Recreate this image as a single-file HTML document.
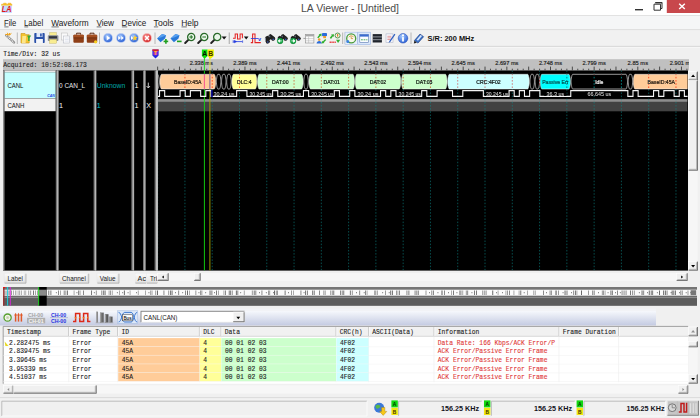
<!DOCTYPE html><html><head><meta charset="utf-8"><title>LA Viewer - [Untitled]</title>
<style>html,body{margin:0;padding:0;background:#f0f0f0;overflow:hidden}svg{display:block}text{white-space:pre}</style></head><body>
<svg width="700" height="418" viewBox="0 0 700 418">
<defs>
<linearGradient id="btn" x1="0" y1="0" x2="0" y2="1"><stop offset="0" stop-color="#fafafa"/><stop offset="1" stop-color="#e4e4e4"/></linearGradient>
<linearGradient id="tb2" x1="0" y1="0" x2="0" y2="1"><stop offset="0" stop-color="#f6f8fc"/><stop offset="1" stop-color="#c4cbe2"/></linearGradient>
<radialGradient id="blu" cx="0.4" cy="0.3" r="0.8"><stop offset="0" stop-color="#a8ccff"/><stop offset="1" stop-color="#1c54d0"/></radialGradient>
<radialGradient id="redg" cx="0.4" cy="0.35" r="0.7"><stop offset="0" stop-color="#ff9c9c"/><stop offset="1" stop-color="#d02020"/></radialGradient>
</defs>
<rect x="0.00" y="0.00" width="700.00" height="418.00" fill="#f0f0f0" />
<rect x="0.00" y="0.00" width="700.00" height="15.50" fill="#ffffff" />
<line x1="0.00" y1="15.50" x2="700.00" y2="15.50" stroke="#dcdcdc" stroke-width="0.8" />
<rect x="1.60" y="5.40" width="10.30" height="7.50" fill="#c4daff" />
<path d="M1.6 5.6v-1.4h2v-1h2.6v1h2v-1h2.6v1h1.1v1.4" fill="#f8c020" stroke="#f0a818" stroke-width="0.5"/>
<text x="1.70" y="12.30" font-family="Liberation Sans, sans-serif" font-size="8.3" font-weight="bold" fill="#e01818" text-anchor="start" textLength="9.80" lengthAdjust="spacingAndGlyphs" font-style="italic">LA</text>
<text x="350.00" y="11.90" font-family="Liberation Sans, sans-serif" font-size="10.5" font-weight="normal" fill="#4c4c4c" text-anchor="middle" textLength="98.00" lengthAdjust="spacingAndGlyphs" >LA Viewer - [Untitled]</text>
<rect x="635.00" y="9.00" width="8.00" height="1.40" fill="#333" />
<path d="M655.5 2.5h6.5v6h-1.5 M654 4.2h6.5v6h-6.5z" fill="none" stroke="#333" stroke-width="1"/>
<rect x="655.20" y="2.20" width="7.00" height="1.20" fill="#333" />
<rect x="666.80" y="0.00" width="34.00" height="13.00" fill="#c8484c" />
<path d="M679.2 3.7l5.6 5.4M684.8 3.7l-5.6 5.4" stroke="#fff" stroke-width="1.4" fill="none"/>
<rect x="0.00" y="16.00" width="700.00" height="13.60" fill="#f5f6f7" />
<line x1="0.00" y1="29.80" x2="700.00" y2="29.80" stroke="#cfcfcf" stroke-width="0.8" />
<text x="4.00" y="25.70" font-family="Liberation Sans, sans-serif" font-size="8.6" font-weight="normal" fill="#1a1a1a" text-anchor="start" textLength="12.30" lengthAdjust="spacingAndGlyphs" >File</text>
<line x1="4.30" y1="26.90" x2="8.60" y2="26.90" stroke="#1a1a1a" stroke-width="0.6" />
<text x="24.00" y="25.70" font-family="Liberation Sans, sans-serif" font-size="8.6" font-weight="normal" fill="#1a1a1a" text-anchor="start" textLength="19.20" lengthAdjust="spacingAndGlyphs" >Label</text>
<line x1="24.30" y1="26.90" x2="28.20" y2="26.90" stroke="#1a1a1a" stroke-width="0.6" />
<text x="51.20" y="25.70" font-family="Liberation Sans, sans-serif" font-size="8.6" font-weight="normal" fill="#1a1a1a" text-anchor="start" textLength="37.40" lengthAdjust="spacingAndGlyphs" >Waveform</text>
<line x1="51.50" y1="26.90" x2="58.80" y2="26.90" stroke="#1a1a1a" stroke-width="0.6" />
<text x="96.40" y="25.70" font-family="Liberation Sans, sans-serif" font-size="8.6" font-weight="normal" fill="#1a1a1a" text-anchor="start" textLength="17.60" lengthAdjust="spacingAndGlyphs" >View</text>
<line x1="96.70" y1="26.90" x2="101.40" y2="26.90" stroke="#1a1a1a" stroke-width="0.6" />
<text x="121.60" y="25.70" font-family="Liberation Sans, sans-serif" font-size="8.6" font-weight="normal" fill="#1a1a1a" text-anchor="start" textLength="24.60" lengthAdjust="spacingAndGlyphs" >Device</text>
<line x1="121.90" y1="26.90" x2="127.20" y2="26.90" stroke="#1a1a1a" stroke-width="0.6" />
<text x="153.60" y="25.70" font-family="Liberation Sans, sans-serif" font-size="8.6" font-weight="normal" fill="#1a1a1a" text-anchor="start" textLength="20.00" lengthAdjust="spacingAndGlyphs" >Tools</text>
<line x1="153.90" y1="26.90" x2="158.20" y2="26.90" stroke="#1a1a1a" stroke-width="0.6" />
<text x="181.20" y="25.70" font-family="Liberation Sans, sans-serif" font-size="8.6" font-weight="normal" fill="#1a1a1a" text-anchor="start" textLength="17.40" lengthAdjust="spacingAndGlyphs" >Help</text>
<line x1="181.50" y1="26.90" x2="186.80" y2="26.90" stroke="#1a1a1a" stroke-width="0.6" />
<rect x="0.00" y="30.20" width="700.00" height="16.00" fill="#f1f1f1" />
<line x1="0.00" y1="46.40" x2="700.00" y2="46.40" stroke="#c4c4c4" stroke-width="0.8" />
<line x1="0.00" y1="47.20" x2="700.00" y2="47.20" stroke="#fbfbfb" stroke-width="0.8" />
<g transform="translate(10,38)"><path d="M-3.8 -2.6L4 4.4" stroke="#8a8a8a" stroke-width="2.4" stroke-linecap="round"/><path d="M-3.8 -2.6L4 4.4" stroke="#f4f4f4" stroke-width="1.3" stroke-dasharray="1.1 0.9"/><path d="M-4.6-3.6l3.4.4M-2.6-5.2l1 2.4M1.4-4.6l-2.2 1.8M-0.4-5l0 2" stroke="#f0a010" stroke-width="1"/></g>
<line x1="17.30" y1="32.50" x2="17.30" y2="44.00" stroke="#a8a8a8" stroke-width="0.8" />
<g transform="translate(26,38)"><path d="M-5-4.5h4l1 1.2h3.2v8.3h-8.2z" fill="#f4c430" stroke="#c89010" stroke-width="0.6"/><path d="M-3.6-2h3.8l-.6 7h-3.8z" fill="#fde58a"/><path d="M1.2-2.6h4l-1.6 2.6v3h-1.5v-3z" fill="#38a838"/></g>
<g transform="translate(39.5,38)"><rect x="-5.2" y="-5" width="10.4" height="10" rx="0.8" fill="#2a50a8"/><rect x="-3" y="-5" width="6" height="4" fill="#dfe8fa"/><rect x="0.6" y="-4.5" width="1.6" height="3" fill="#2a50a8"/><rect x="-3.4" y="1" width="6.8" height="4" fill="#f4f6fb"/></g>
<g transform="translate(53,38)"><rect x="-3.2" y="-5.4" width="6.4" height="3.2" fill="#f8ec90" stroke="#c0b050" stroke-width="0.4"/><rect x="-5.2" y="-2.8" width="10.6" height="5.8" rx="0.8" fill="#8c9098"/><rect x="-4" y="-1.8" width="8" height="2.2" fill="#30343c"/><rect x="-3.4" y="1.4" width="7" height="3.8" fill="#f8ec90" stroke="#c0b050" stroke-width="0.4"/></g>
<g transform="translate(65.5,38)"><rect x="-4.2" y="-5" width="6" height="7" fill="#fafafa" stroke="#b8b8b8" stroke-width="0.5"/><rect x="-1.8" y="-2" width="6" height="7" fill="#fdfdfd" stroke="#b0b4c0" stroke-width="0.5"/><path d="M-0.8 0h4M-0.8 1.6h4M-0.8 3.2h4" stroke="#c4cce0" stroke-width="0.5"/></g>
<g transform="translate(78.6,38)"><path d="M-2-3.4v-1.4h4v1.4" fill="none" stroke="#5a2810" stroke-width="1"/><rect x="-5.2" y="-3.2" width="10.4" height="8" rx="1" fill="#8e3e16"/><rect x="-5.2" y="-3.2" width="10.4" height="2.6" rx="1" fill="#a44e20"/><rect x="-5.2" y="-0.4" width="10.4" height="0.7" fill="#6a2c0c"/></g>
<g transform="translate(92,38)"><path d="M-2-3.4v-1.4h4v1.4" fill="none" stroke="#5a2810" stroke-width="1"/><rect x="-5.2" y="-3.2" width="10.4" height="8" rx="1" fill="#8e3e16"/><rect x="-5.2" y="-3.2" width="10.4" height="2.6" rx="1" fill="#a44e20"/><rect x="-5.2" y="-0.4" width="10.4" height="0.7" fill="#6a2c0c"/><circle cx="3.6" cy="3.8" r="1.6" fill="#f8d020"/></g>
<line x1="99.50" y1="32.50" x2="99.50" y2="44.00" stroke="#a8a8a8" stroke-width="0.8" />
<g transform="translate(108,38)"><circle r="4.9" fill="#b4c8f2"/><circle r="4.1" fill="url(#blu)"/>
<path d="M-1.3-2.4l3.6 2.4l-3.6 2.4z" fill="#fff"/>
</g>
<g transform="translate(121,38)"><circle r="4.9" fill="#b4c8f2"/><circle r="4.1" fill="url(#blu)"/>
<path d="M-2.8-2.1l2.6 2.1l-2.6 2.1zM0.2-2.1l2.6 2.1l-2.6 2.1z" fill="#fff"/>
</g>
<g transform="translate(134,38)"><circle r="4.9" fill="#b4c8f2"/><circle r="4.1" fill="url(#blu)"/>
<path d="M-3-2l2.4 2l-2.4 2z" fill="#fff"/><path d="M0.8-3l.9 2.1h1.8l-1.4 1.4l.5 2.1l-1.8-1.2l-1.8 1.2l.5-2.1l-1-1.1h1.4z" fill="#ffd030"/>
</g>
<g transform="translate(147,38)"><circle r="4.9" fill="#f2b4b4"/><circle r="4.1" fill="url(#redg)"/><path d="M-1.9-1.9l3.8 3.8M1.9-1.9l-3.8 3.8" stroke="#fff" stroke-width="1.4"/></g>
<line x1="155.00" y1="32.50" x2="155.00" y2="44.00" stroke="#a8a8a8" stroke-width="0.8" />
<g transform="translate(162.6,38)"><path d="M-5.5 0.6l5-4.6l4 1.2l-1 3.2l-4.6 3.8z" fill="#2878d8"/><path d="M-5.5 0.6l5-4.6l4 1.2l-4.6 2z" fill="#58a0f0"/>
<path d="M1 3.4h4.6" stroke="#20a020" stroke-width="1.6"/><path d="M3.3 1.1v4.6" stroke="#20a020" stroke-width="1.6"/></g>
<g transform="translate(176,38)"><path d="M-5.5 0.6l5-4.6l4 1.2l-1 3.2l-4.6 3.8z" fill="#2878d8"/><path d="M-5.5 0.6l5-4.6l4 1.2l-4.6 2z" fill="#58a0f0"/>
<path d="M1 3.4h4.6" stroke="#20a020" stroke-width="1.6"/></g>
<g transform="translate(190,38)"><path d="M-1.4 1.6L-4.8 5" stroke="#222" stroke-width="2" stroke-linecap="round"/><circle cx="1.2" cy="-1" r="3.6" fill="#eaf6ea" stroke="#2a6a2a" stroke-width="1.3"/>
<path d="M-0.6-1h3.6" stroke="#207020" stroke-width="1"/>
<path d="M1.2-2.8v3.6" stroke="#207020" stroke-width="1"/>
</g>
<g transform="translate(203,38)"><path d="M-1.4 1.6L-4.8 5" stroke="#222" stroke-width="2" stroke-linecap="round"/><circle cx="1.2" cy="-1" r="3.6" fill="#eaf6ea" stroke="#2a6a2a" stroke-width="1.3"/>
<path d="M-0.6-1h3.6" stroke="#207020" stroke-width="1"/>
</g>
<g transform="translate(216,38)"><path d="M-1.4 1.6L-4.8 5" stroke="#222" stroke-width="2" stroke-linecap="round"/><circle cx="1.2" cy="-1" r="3.6" fill="#eaf6ea" stroke="#2a6a2a" stroke-width="1.3"/>
</g>
<path d="M221.6 36.6l2.5 3l2.5-3z" fill="#111"/>
<line x1="229.30" y1="32.50" x2="229.30" y2="44.00" stroke="#b8b8b8" stroke-width="1.3" />
<path d="M233 38.3h2.2v-4.3h2.3v4.9h2.6v-4.9h2.3v4.3" fill="none" stroke="#e42424" stroke-width="1.05"/>
<path d="M233.6 41.6h8.6" stroke="#2038e0" stroke-width="0.8"/><path d="M233.2 40.2v2.8M236.4 41.6l-2-1.2v2.4zM242.6 40.4v2.4" stroke="#2038e0" stroke-width="0.7" fill="#2038e0"/>
<path d="M243.9 36.6h4.6l-2.3 3z" fill="#111"/>
<path d="M250.8 42.6h1.8v-8.6h2.4v8.6h5.8" fill="none" stroke="#e42424" stroke-width="1.05"/>
<path d="M250.8 38.5h7.2" stroke="#2038e0" stroke-width="0.8"/>
<text x="257.90" y="40.60" font-family="Liberation Sans, sans-serif" font-size="5.6" font-weight="bold" fill="#2038e0" text-anchor="start" >v</text>
<g transform="translate(269.5,38.3)"><g transform="rotate(-28) scale(0.95)"><path d="M-5.2 1.2l2-4.6h2.4l0.8 1.4l0.8-1.4h2.4l2 4.6v2.2h-4v-1.8h-2.4v1.8h-4z" fill="#1e1e1e"/><circle cx="-3.2" cy="2.2" r="2.1" fill="#262626"/><circle cx="3.2" cy="2.2" r="2.1" fill="#262626"/><path d="M-3.8-2.4l-1 2.4M1.4-2.4l-.6 1.6" stroke="#8898b8" stroke-width="0.7"/><circle cx="-3.4" cy="2.6" r="0.8" fill="#3858c0"/><circle cx="3" cy="2.8" r="0.8" fill="#3858c0"/></g>
</g>
<g transform="translate(282,38.3)"><g transform="rotate(-28) scale(0.95)"><path d="M-5.2 1.2l2-4.6h2.4l0.8 1.4l0.8-1.4h2.4l2 4.6v2.2h-4v-1.8h-2.4v1.8h-4z" fill="#1e1e1e"/><circle cx="-3.2" cy="2.2" r="2.1" fill="#262626"/><circle cx="3.2" cy="2.2" r="2.1" fill="#262626"/><path d="M-3.8-2.4l-1 2.4M1.4-2.4l-.6 1.6" stroke="#8898b8" stroke-width="0.7"/><circle cx="-3.4" cy="2.6" r="0.8" fill="#3858c0"/><circle cx="3" cy="2.8" r="0.8" fill="#3858c0"/></g>
<circle cx="-1.9" cy="2.6" r="2.9" fill="#18a848" stroke="#0c7830" stroke-width="0.3"/>
<path d="M-3.6 2.6h3.4M-3.8 2.6l1.5-1.3v2.6z" stroke="#fff" stroke-width="0.8" fill="#fff"/>
</g>
<g transform="translate(295,38.3)"><g transform="rotate(-28) scale(0.95)"><path d="M-5.2 1.2l2-4.6h2.4l0.8 1.4l0.8-1.4h2.4l2 4.6v2.2h-4v-1.8h-2.4v1.8h-4z" fill="#1e1e1e"/><circle cx="-3.2" cy="2.2" r="2.1" fill="#262626"/><circle cx="3.2" cy="2.2" r="2.1" fill="#262626"/><path d="M-3.8-2.4l-1 2.4M1.4-2.4l-.6 1.6" stroke="#8898b8" stroke-width="0.7"/><circle cx="-3.4" cy="2.6" r="0.8" fill="#3858c0"/><circle cx="3" cy="2.8" r="0.8" fill="#3858c0"/></g>
<circle cx="-1.9" cy="2.6" r="2.9" fill="#18a848" stroke="#0c7830" stroke-width="0.3"/>
<path d="M-3.6 2.6h3.4M0 2.6l-1.5-1.3v2.6z" stroke="#fff" stroke-width="0.8" fill="#fff"/>
</g>
<g><rect x="305.6" y="34.3" width="8.3" height="8.7" fill="#fcfcfc" stroke="#8c8c8c" stroke-width="0.6"/><rect x="305.6" y="34.3" width="8.3" height="2.1" fill="#a8a8a8"/><path d="M305.6 38.6h8.3M305.6 40.8h8.3M308.6 36.4v6.6" stroke="#b0b0b0" stroke-width="0.5"/><path d="M303.4 38.4h2.2" stroke="#8a8a8a" stroke-width="0.8"/></g>
<g><rect x="322" y="33" width="5" height="3.2" rx="0.8" fill="#2c6cd8"/><rect x="323.2" y="36" width="2.8" height="2.2" fill="#f0a030"/><path d="M317.2 37.4l2.2-2.6l-.8-.6l3 -.6l-.2 2.8l-.8-.7l-2.2 2.6z" fill="#30b030"/><circle cx="319.2" cy="39.6" r="1.3" fill="#f0a030"/><path d="M316.6 43.6c0-3.6 5.2-3.6 5.2 0z" fill="#2c6cd8"/><path d="M326.2 40l-2.4 2.4l.8.7l-3 .4l.4-2.8l.8.7l2.4-2.4z" fill="#30b030"/></g>
<g><path d="M329.8 37.8l2-2.6l-.8-.6l3-.4l-.2 2.8l-.8-.7l-2 2.6z" fill="#30b030"/><circle cx="337.6" cy="35.5" r="2.5" fill="#f0f4e4" stroke="#4a9040" stroke-width="0.9"/><rect x="337" y="34" width="1.2" height="2.6" fill="#e08030"/><path d="M329.6 42.2h6.2" stroke="#e83838" stroke-width="1.5" stroke-dasharray="1.3 0.5"/><path d="M336 39.8h4.2l-2.1 3.2z" fill="#30b030"/></g>
<line x1="342.60" y1="32.50" x2="342.60" y2="44.00" stroke="#a8a8a8" stroke-width="0.8" />
<rect x="345.00" y="32.20" width="12.40" height="12.40" fill="#e6eefa" stroke="#a4bce4" stroke-width="0.6"/>
<line x1="344.30" y1="32.50" x2="344.30" y2="44.00" stroke="#c8c8c8" stroke-width="0.6" />
<g transform="translate(351.2,38.4)"><circle r="4.5" fill="#f6f8ec" stroke="#4a9a3a" stroke-width="1.3"/><path d="M-2.4-1.2a2.8 2.8 0 0 1 4.8 0" stroke="#e08828" stroke-width="0.8" fill="none"/><path d="M0-1.8v2h1.8" stroke="#c87820" stroke-width="0.7" fill="none"/><circle cx="-3.4" cy="3.2" r="1.5" fill="#3a80e0"/></g>
<rect x="357.80" y="32.20" width="12.60" height="12.40" fill="#dce8fa" stroke="#98b4e4" stroke-width="0.6"/>
<g transform="translate(364.2,38.4)"><rect x="-4.4" y="-4" width="8.8" height="8" fill="#fafcff" stroke="#5878b0" stroke-width="0.6"/><rect x="-4.4" y="-4" width="8.8" height="2.2" fill="#3a6cd0"/><path d="M-3.2 1.4h6.4" stroke="#38a048" stroke-width="0.9" stroke-dasharray="1.8 0.8"/></g>
<g transform="translate(377.3,38.3)"><rect x="-4.6" y="-4.2" width="9.2" height="8.4" fill="#20242c"/><path d="M-4.6-1.4h9.2M-4.6 1.4h9.2" stroke="#c0c4cc" stroke-width="0.7"/></g>
<g transform="translate(390,38.3)"><rect x="-4" y="-4.4" width="7" height="8.8" fill="#f8f8fc" stroke="#a0a8c0" stroke-width="0.5"/><path d="M-2.6-2h4M-2.6-.4h4M-2.6 1.2h3" stroke="#d04848" stroke-width="0.5"/><path d="M4.4-4.6L-0.6 2.6l-0.8 2l1.8-1.2l5-7.2z" fill="#3060c0"/></g>
<g transform="translate(403,38.3)"><circle r="4.8" fill="url(#blu)" stroke="#1c44b0" stroke-width="0.5"/><rect x="-0.9" y="-1.2" width="1.8" height="4.4" fill="#fff"/><circle cy="-2.9" r="1.05" fill="#fff"/></g>
<line x1="411.00" y1="32.50" x2="411.00" y2="44.00" stroke="#a8a8a8" stroke-width="0.8" />
<g transform="translate(419,38.3)"><path d="M-4.6 2.2l5.6-6.4l3.6 2.6l-5.6 6.4z" fill="#3a70c8" stroke="#183878" stroke-width="0.6"/><path d="M-2.4 1.4l4-4.6l1.4 1l-4 4.6z" fill="#d8e8ff"/><path d="M-4.6 2.2l-.6 3l3-.8z" fill="#222"/></g>
<text x="427.60" y="41.20" font-family="Liberation Sans, sans-serif" font-size="7.6" font-weight="bold" fill="#111" text-anchor="start" textLength="46.60" lengthAdjust="spacingAndGlyphs" >S/R: 200 MHz</text>
<text x="3.20" y="56.00" font-family="Liberation Mono, monospace" font-size="6.3" font-weight="normal" fill="#222" text-anchor="start" textLength="57.00" lengthAdjust="spacingAndGlyphs"  stroke="#222" stroke-width="0.1">Time/Div: 32 us</text>
<path d="M152.4 49.4h6.2v6l-3.1 3.2l-3.1-3.2z" fill="#2028e0"/>
<rect x="152.40" y="49.40" width="6.20" height="1.50" fill="#e82020" />
<rect x="153.50" y="51.00" width="4.00" height="4.20" fill="#c030c0" />
<text x="155.50" y="55.20" font-family="Liberation Sans, sans-serif" font-size="5.2" font-weight="bold" fill="#ffc020" text-anchor="middle" >T</text>
<path d="M201.9 49.6h5.7v6.4l-2.6 2.4h-.8l-2.3-2.4z" fill="#10e010"/><path d="M207.6 49.6h6.2v6.4l-2.8 2.4h-.8l-2.6-2.4z" fill="#f0f000"/>
<text x="204.70" y="56.00" font-family="Liberation Sans, sans-serif" font-size="6.8" font-weight="bold" fill="#001800" text-anchor="middle" >A</text>
<text x="210.70" y="56.00" font-family="Liberation Sans, sans-serif" font-size="6.8" font-weight="bold" fill="#3c3000" text-anchor="middle" >B</text>
<line x1="204.40" y1="56.00" x2="204.40" y2="70.40" stroke="#10e010" stroke-width="0.9" />
<line x1="209.90" y1="56.00" x2="209.90" y2="70.40" stroke="#e8e800" stroke-width="1" />
<rect x="3.00" y="59.20" width="686.00" height="11.20" fill="#c0c0c0" />
<text x="3.20" y="67.20" font-family="Liberation Mono, monospace" font-size="6.3" font-weight="normal" fill="#222" text-anchor="start" textLength="83.60" lengthAdjust="spacingAndGlyphs"  stroke="#222" stroke-width="0.1">Acquired: 10:52:08.173</text>
<line x1="157.65" y1="66.60" x2="157.65" y2="70.20" stroke="#2c2c2c" stroke-width="0.8" />
<line x1="163.11" y1="68.70" x2="163.11" y2="70.20" stroke="#2c2c2c" stroke-width="0.8" />
<line x1="168.56" y1="68.70" x2="168.56" y2="70.20" stroke="#2c2c2c" stroke-width="0.8" />
<line x1="174.02" y1="68.70" x2="174.02" y2="70.20" stroke="#2c2c2c" stroke-width="0.8" />
<line x1="179.47" y1="66.60" x2="179.47" y2="70.20" stroke="#2c2c2c" stroke-width="0.8" />
<line x1="184.93" y1="68.70" x2="184.93" y2="70.20" stroke="#2c2c2c" stroke-width="0.8" />
<line x1="190.39" y1="68.70" x2="190.39" y2="70.20" stroke="#2c2c2c" stroke-width="0.8" />
<line x1="195.84" y1="68.70" x2="195.84" y2="70.20" stroke="#2c2c2c" stroke-width="0.8" />
<line x1="201.30" y1="66.60" x2="201.30" y2="70.20" stroke="#2c2c2c" stroke-width="0.8" />
<line x1="206.76" y1="68.70" x2="206.76" y2="70.20" stroke="#2c2c2c" stroke-width="0.8" />
<line x1="212.21" y1="68.70" x2="212.21" y2="70.20" stroke="#2c2c2c" stroke-width="0.8" />
<line x1="217.67" y1="68.70" x2="217.67" y2="70.20" stroke="#2c2c2c" stroke-width="0.8" />
<line x1="223.12" y1="66.60" x2="223.12" y2="70.20" stroke="#2c2c2c" stroke-width="0.8" />
<line x1="228.58" y1="68.70" x2="228.58" y2="70.20" stroke="#2c2c2c" stroke-width="0.8" />
<line x1="234.04" y1="68.70" x2="234.04" y2="70.20" stroke="#2c2c2c" stroke-width="0.8" />
<line x1="239.49" y1="68.70" x2="239.49" y2="70.20" stroke="#2c2c2c" stroke-width="0.8" />
<line x1="244.95" y1="66.60" x2="244.95" y2="70.20" stroke="#2c2c2c" stroke-width="0.8" />
<line x1="250.41" y1="68.70" x2="250.41" y2="70.20" stroke="#2c2c2c" stroke-width="0.8" />
<line x1="255.86" y1="68.70" x2="255.86" y2="70.20" stroke="#2c2c2c" stroke-width="0.8" />
<line x1="261.32" y1="68.70" x2="261.32" y2="70.20" stroke="#2c2c2c" stroke-width="0.8" />
<line x1="266.77" y1="66.60" x2="266.77" y2="70.20" stroke="#2c2c2c" stroke-width="0.8" />
<line x1="272.23" y1="68.70" x2="272.23" y2="70.20" stroke="#2c2c2c" stroke-width="0.8" />
<line x1="277.69" y1="68.70" x2="277.69" y2="70.20" stroke="#2c2c2c" stroke-width="0.8" />
<line x1="283.14" y1="68.70" x2="283.14" y2="70.20" stroke="#2c2c2c" stroke-width="0.8" />
<line x1="288.60" y1="66.60" x2="288.60" y2="70.20" stroke="#2c2c2c" stroke-width="0.8" />
<line x1="294.06" y1="68.70" x2="294.06" y2="70.20" stroke="#2c2c2c" stroke-width="0.8" />
<line x1="299.51" y1="68.70" x2="299.51" y2="70.20" stroke="#2c2c2c" stroke-width="0.8" />
<line x1="304.97" y1="68.70" x2="304.97" y2="70.20" stroke="#2c2c2c" stroke-width="0.8" />
<line x1="310.43" y1="66.60" x2="310.43" y2="70.20" stroke="#2c2c2c" stroke-width="0.8" />
<line x1="315.88" y1="68.70" x2="315.88" y2="70.20" stroke="#2c2c2c" stroke-width="0.8" />
<line x1="321.34" y1="68.70" x2="321.34" y2="70.20" stroke="#2c2c2c" stroke-width="0.8" />
<line x1="326.79" y1="68.70" x2="326.79" y2="70.20" stroke="#2c2c2c" stroke-width="0.8" />
<line x1="332.25" y1="66.60" x2="332.25" y2="70.20" stroke="#2c2c2c" stroke-width="0.8" />
<line x1="337.71" y1="68.70" x2="337.71" y2="70.20" stroke="#2c2c2c" stroke-width="0.8" />
<line x1="343.16" y1="68.70" x2="343.16" y2="70.20" stroke="#2c2c2c" stroke-width="0.8" />
<line x1="348.62" y1="68.70" x2="348.62" y2="70.20" stroke="#2c2c2c" stroke-width="0.8" />
<line x1="354.07" y1="66.60" x2="354.07" y2="70.20" stroke="#2c2c2c" stroke-width="0.8" />
<line x1="359.53" y1="68.70" x2="359.53" y2="70.20" stroke="#2c2c2c" stroke-width="0.8" />
<line x1="364.99" y1="68.70" x2="364.99" y2="70.20" stroke="#2c2c2c" stroke-width="0.8" />
<line x1="370.44" y1="68.70" x2="370.44" y2="70.20" stroke="#2c2c2c" stroke-width="0.8" />
<line x1="375.90" y1="66.60" x2="375.90" y2="70.20" stroke="#2c2c2c" stroke-width="0.8" />
<line x1="381.36" y1="68.70" x2="381.36" y2="70.20" stroke="#2c2c2c" stroke-width="0.8" />
<line x1="386.81" y1="68.70" x2="386.81" y2="70.20" stroke="#2c2c2c" stroke-width="0.8" />
<line x1="392.27" y1="68.70" x2="392.27" y2="70.20" stroke="#2c2c2c" stroke-width="0.8" />
<line x1="397.73" y1="66.60" x2="397.73" y2="70.20" stroke="#2c2c2c" stroke-width="0.8" />
<line x1="403.18" y1="68.70" x2="403.18" y2="70.20" stroke="#2c2c2c" stroke-width="0.8" />
<line x1="408.64" y1="68.70" x2="408.64" y2="70.20" stroke="#2c2c2c" stroke-width="0.8" />
<line x1="414.09" y1="68.70" x2="414.09" y2="70.20" stroke="#2c2c2c" stroke-width="0.8" />
<line x1="419.55" y1="66.60" x2="419.55" y2="70.20" stroke="#2c2c2c" stroke-width="0.8" />
<line x1="425.01" y1="68.70" x2="425.01" y2="70.20" stroke="#2c2c2c" stroke-width="0.8" />
<line x1="430.46" y1="68.70" x2="430.46" y2="70.20" stroke="#2c2c2c" stroke-width="0.8" />
<line x1="435.92" y1="68.70" x2="435.92" y2="70.20" stroke="#2c2c2c" stroke-width="0.8" />
<line x1="441.38" y1="66.60" x2="441.38" y2="70.20" stroke="#2c2c2c" stroke-width="0.8" />
<line x1="446.83" y1="68.70" x2="446.83" y2="70.20" stroke="#2c2c2c" stroke-width="0.8" />
<line x1="452.29" y1="68.70" x2="452.29" y2="70.20" stroke="#2c2c2c" stroke-width="0.8" />
<line x1="457.74" y1="68.70" x2="457.74" y2="70.20" stroke="#2c2c2c" stroke-width="0.8" />
<line x1="463.20" y1="66.60" x2="463.20" y2="70.20" stroke="#2c2c2c" stroke-width="0.8" />
<line x1="468.66" y1="68.70" x2="468.66" y2="70.20" stroke="#2c2c2c" stroke-width="0.8" />
<line x1="474.11" y1="68.70" x2="474.11" y2="70.20" stroke="#2c2c2c" stroke-width="0.8" />
<line x1="479.57" y1="68.70" x2="479.57" y2="70.20" stroke="#2c2c2c" stroke-width="0.8" />
<line x1="485.02" y1="66.60" x2="485.02" y2="70.20" stroke="#2c2c2c" stroke-width="0.8" />
<line x1="490.48" y1="68.70" x2="490.48" y2="70.20" stroke="#2c2c2c" stroke-width="0.8" />
<line x1="495.94" y1="68.70" x2="495.94" y2="70.20" stroke="#2c2c2c" stroke-width="0.8" />
<line x1="501.39" y1="68.70" x2="501.39" y2="70.20" stroke="#2c2c2c" stroke-width="0.8" />
<line x1="506.85" y1="66.60" x2="506.85" y2="70.20" stroke="#2c2c2c" stroke-width="0.8" />
<line x1="512.31" y1="68.70" x2="512.31" y2="70.20" stroke="#2c2c2c" stroke-width="0.8" />
<line x1="517.76" y1="68.70" x2="517.76" y2="70.20" stroke="#2c2c2c" stroke-width="0.8" />
<line x1="523.22" y1="68.70" x2="523.22" y2="70.20" stroke="#2c2c2c" stroke-width="0.8" />
<line x1="528.67" y1="66.60" x2="528.67" y2="70.20" stroke="#2c2c2c" stroke-width="0.8" />
<line x1="534.13" y1="68.70" x2="534.13" y2="70.20" stroke="#2c2c2c" stroke-width="0.8" />
<line x1="539.59" y1="68.70" x2="539.59" y2="70.20" stroke="#2c2c2c" stroke-width="0.8" />
<line x1="545.04" y1="68.70" x2="545.04" y2="70.20" stroke="#2c2c2c" stroke-width="0.8" />
<line x1="550.50" y1="66.60" x2="550.50" y2="70.20" stroke="#2c2c2c" stroke-width="0.8" />
<line x1="555.96" y1="68.70" x2="555.96" y2="70.20" stroke="#2c2c2c" stroke-width="0.8" />
<line x1="561.41" y1="68.70" x2="561.41" y2="70.20" stroke="#2c2c2c" stroke-width="0.8" />
<line x1="566.87" y1="68.70" x2="566.87" y2="70.20" stroke="#2c2c2c" stroke-width="0.8" />
<line x1="572.33" y1="66.60" x2="572.33" y2="70.20" stroke="#2c2c2c" stroke-width="0.8" />
<line x1="577.78" y1="68.70" x2="577.78" y2="70.20" stroke="#2c2c2c" stroke-width="0.8" />
<line x1="583.24" y1="68.70" x2="583.24" y2="70.20" stroke="#2c2c2c" stroke-width="0.8" />
<line x1="588.69" y1="68.70" x2="588.69" y2="70.20" stroke="#2c2c2c" stroke-width="0.8" />
<line x1="594.15" y1="66.60" x2="594.15" y2="70.20" stroke="#2c2c2c" stroke-width="0.8" />
<line x1="599.61" y1="68.70" x2="599.61" y2="70.20" stroke="#2c2c2c" stroke-width="0.8" />
<line x1="605.06" y1="68.70" x2="605.06" y2="70.20" stroke="#2c2c2c" stroke-width="0.8" />
<line x1="610.52" y1="68.70" x2="610.52" y2="70.20" stroke="#2c2c2c" stroke-width="0.8" />
<line x1="615.98" y1="66.60" x2="615.98" y2="70.20" stroke="#2c2c2c" stroke-width="0.8" />
<line x1="621.43" y1="68.70" x2="621.43" y2="70.20" stroke="#2c2c2c" stroke-width="0.8" />
<line x1="626.89" y1="68.70" x2="626.89" y2="70.20" stroke="#2c2c2c" stroke-width="0.8" />
<line x1="632.34" y1="68.70" x2="632.34" y2="70.20" stroke="#2c2c2c" stroke-width="0.8" />
<line x1="637.80" y1="66.60" x2="637.80" y2="70.20" stroke="#2c2c2c" stroke-width="0.8" />
<line x1="643.26" y1="68.70" x2="643.26" y2="70.20" stroke="#2c2c2c" stroke-width="0.8" />
<line x1="648.71" y1="68.70" x2="648.71" y2="70.20" stroke="#2c2c2c" stroke-width="0.8" />
<line x1="654.17" y1="68.70" x2="654.17" y2="70.20" stroke="#2c2c2c" stroke-width="0.8" />
<line x1="659.62" y1="66.60" x2="659.62" y2="70.20" stroke="#2c2c2c" stroke-width="0.8" />
<line x1="665.08" y1="68.70" x2="665.08" y2="70.20" stroke="#2c2c2c" stroke-width="0.8" />
<line x1="670.54" y1="68.70" x2="670.54" y2="70.20" stroke="#2c2c2c" stroke-width="0.8" />
<line x1="675.99" y1="68.70" x2="675.99" y2="70.20" stroke="#2c2c2c" stroke-width="0.8" />
<line x1="681.45" y1="66.60" x2="681.45" y2="70.20" stroke="#2c2c2c" stroke-width="0.8" />
<line x1="686.91" y1="68.70" x2="686.91" y2="70.20" stroke="#2c2c2c" stroke-width="0.8" />
<clipPath id="rc"><rect x="157" y="59" width="532" height="12"/></clipPath>
<g clip-path="url(#rc)">
<text x="201.30" y="65.30" font-family="Liberation Sans, sans-serif" font-size="6" font-weight="normal" fill="#222" text-anchor="middle" textLength="23.20" lengthAdjust="spacingAndGlyphs"  stroke="#222" stroke-width="0.16">2.338 ms</text>
<text x="244.95" y="65.30" font-family="Liberation Sans, sans-serif" font-size="6" font-weight="normal" fill="#222" text-anchor="middle" textLength="23.20" lengthAdjust="spacingAndGlyphs"  stroke="#222" stroke-width="0.16">2.389 ms</text>
<text x="288.60" y="65.30" font-family="Liberation Sans, sans-serif" font-size="6" font-weight="normal" fill="#222" text-anchor="middle" textLength="23.20" lengthAdjust="spacingAndGlyphs"  stroke="#222" stroke-width="0.16">2.441 ms</text>
<text x="332.25" y="65.30" font-family="Liberation Sans, sans-serif" font-size="6" font-weight="normal" fill="#222" text-anchor="middle" textLength="23.20" lengthAdjust="spacingAndGlyphs"  stroke="#222" stroke-width="0.16">2.492 ms</text>
<text x="375.90" y="65.30" font-family="Liberation Sans, sans-serif" font-size="6" font-weight="normal" fill="#222" text-anchor="middle" textLength="23.20" lengthAdjust="spacingAndGlyphs"  stroke="#222" stroke-width="0.16">2.543 ms</text>
<text x="419.55" y="65.30" font-family="Liberation Sans, sans-serif" font-size="6" font-weight="normal" fill="#222" text-anchor="middle" textLength="23.20" lengthAdjust="spacingAndGlyphs"  stroke="#222" stroke-width="0.16">2.594 ms</text>
<text x="463.20" y="65.30" font-family="Liberation Sans, sans-serif" font-size="6" font-weight="normal" fill="#222" text-anchor="middle" textLength="23.20" lengthAdjust="spacingAndGlyphs"  stroke="#222" stroke-width="0.16">2.645 ms</text>
<text x="506.85" y="65.30" font-family="Liberation Sans, sans-serif" font-size="6" font-weight="normal" fill="#222" text-anchor="middle" textLength="23.20" lengthAdjust="spacingAndGlyphs"  stroke="#222" stroke-width="0.16">2.697 ms</text>
<text x="550.50" y="65.30" font-family="Liberation Sans, sans-serif" font-size="6" font-weight="normal" fill="#222" text-anchor="middle" textLength="23.20" lengthAdjust="spacingAndGlyphs"  stroke="#222" stroke-width="0.16">2.748 ms</text>
<text x="594.15" y="65.30" font-family="Liberation Sans, sans-serif" font-size="6" font-weight="normal" fill="#222" text-anchor="middle" textLength="23.20" lengthAdjust="spacingAndGlyphs"  stroke="#222" stroke-width="0.16">2.799 ms</text>
<text x="637.80" y="65.30" font-family="Liberation Sans, sans-serif" font-size="6" font-weight="normal" fill="#222" text-anchor="middle" textLength="20.40" lengthAdjust="spacingAndGlyphs"  stroke="#222" stroke-width="0.16">2.85 ms</text>
<text x="681.45" y="65.30" font-family="Liberation Sans, sans-serif" font-size="6" font-weight="normal" fill="#222" text-anchor="middle" textLength="23.20" lengthAdjust="spacingAndGlyphs"  stroke="#222" stroke-width="0.16">2.901 ms</text>
</g>
<line x1="204.40" y1="59.00" x2="204.40" y2="70.40" stroke="#10e010" stroke-width="0.9" />
<line x1="209.90" y1="59.00" x2="209.90" y2="70.40" stroke="#e4e460" stroke-width="1.1" />
<rect x="3.00" y="70.40" width="685.00" height="200.20" fill="#000" />
<rect x="3.00" y="70.40" width="1.50" height="200.20" fill="#8c8c8c" />
<rect x="4.50" y="72.20" width="51.20" height="26.20" fill="#c4ffff" />
<rect x="4.50" y="98.60" width="51.20" height="12.60" fill="#f2f2f2" />
<line x1="4.50" y1="98.50" x2="55.70" y2="98.50" stroke="#b0b0b0" stroke-width="0.5" />
<rect x="4.50" y="70.40" width="51.20" height="1.80" fill="#e8e8e8" />
<text x="7.40" y="88.20" font-family="Liberation Sans, sans-serif" font-size="7.4" font-weight="normal" fill="#111" text-anchor="start" textLength="16.00" lengthAdjust="spacingAndGlyphs" >CANL</text>
<text x="7.40" y="107.60" font-family="Liberation Sans, sans-serif" font-size="7.4" font-weight="normal" fill="#111" text-anchor="start" textLength="17.00" lengthAdjust="spacingAndGlyphs" >CANH</text>
<text x="47.20" y="97.20" font-family="Liberation Sans, sans-serif" font-size="3.8" font-weight="bold" fill="#2040e0" text-anchor="start" textLength="7.60" lengthAdjust="spacingAndGlyphs" font-style="italic">CAN</text>
<rect x="55.80" y="70.40" width="2.80" height="200.20" fill="#787878" />
<rect x="57.06" y="70.40" width="1.26" height="200.20" fill="#b6b6b6" />
<rect x="93.60" y="70.40" width="2.80" height="200.20" fill="#787878" />
<rect x="94.86" y="70.40" width="1.26" height="200.20" fill="#b6b6b6" />
<rect x="131.40" y="70.40" width="2.80" height="200.20" fill="#787878" />
<rect x="132.66" y="70.40" width="1.26" height="200.20" fill="#b6b6b6" />
<rect x="143.00" y="70.40" width="2.60" height="200.20" fill="#787878" />
<rect x="144.17" y="70.40" width="1.17" height="200.20" fill="#b6b6b6" />
<rect x="154.60" y="70.40" width="3.00" height="200.20" fill="#787878" />
<rect x="155.95" y="70.40" width="1.35" height="200.20" fill="#b6b6b6" />
<text x="59.00" y="88.20" font-family="Liberation Sans, sans-serif" font-size="7.2" font-weight="normal" fill="#e6e6e6" text-anchor="start" textLength="26.20" lengthAdjust="spacingAndGlyphs" >0 CAN_L</text>
<text x="96.80" y="88.20" font-family="Liberation Sans, sans-serif" font-size="7.2" font-weight="normal" fill="#00a8a8" text-anchor="start" textLength="28.40" lengthAdjust="spacingAndGlyphs" >Unknown</text>
<text x="134.40" y="88.20" font-family="Liberation Sans, sans-serif" font-size="7.2" font-weight="normal" fill="#f4f4f4" text-anchor="start" >1</text>
<path d="M148.3 82.6v5M146.6 86l1.7 2l1.7-2" stroke="#f4f4f4" stroke-width="0.8" fill="none"/>
<text x="59.00" y="107.60" font-family="Liberation Sans, sans-serif" font-size="7.2" font-weight="normal" fill="#f4f4f4" text-anchor="start" >1</text>
<text x="96.80" y="107.60" font-family="Liberation Sans, sans-serif" font-size="7.2" font-weight="normal" fill="#00c8c8" text-anchor="start" >1</text>
<text x="134.40" y="107.60" font-family="Liberation Sans, sans-serif" font-size="7.2" font-weight="normal" fill="#f4f4f4" text-anchor="start" >1</text>
<text x="146.20" y="107.60" font-family="Liberation Sans, sans-serif" font-size="7.2" font-weight="normal" fill="#f4f4f4" text-anchor="start" >X</text>
<clipPath id="wc"><rect x="157.8" y="70.4" width="529.8" height="200.20000000000002"/></clipPath>
<g clip-path="url(#wc)">
<rect x="157.80" y="98.90" width="529.80" height="12.40" fill="#424242" />
<line x1="157.80" y1="100.50" x2="687.60" y2="100.50" stroke="#8e8e8e" stroke-width="2.6" />
<line x1="157.65" y1="70.40" x2="157.65" y2="270.60" stroke="#0c8c8c" stroke-width="0.7" stroke-dasharray="1.5 1.65" stroke-opacity="0.8"/>
<line x1="184.93" y1="70.40" x2="184.93" y2="270.60" stroke="#0c8c8c" stroke-width="0.7" stroke-dasharray="1.5 1.65" stroke-opacity="0.8"/>
<line x1="212.21" y1="70.40" x2="212.21" y2="270.60" stroke="#0c8c8c" stroke-width="0.7" stroke-dasharray="1.5 1.65" stroke-opacity="0.8"/>
<line x1="239.49" y1="70.40" x2="239.49" y2="270.60" stroke="#0c8c8c" stroke-width="0.7" stroke-dasharray="1.5 1.65" stroke-opacity="0.8"/>
<line x1="266.77" y1="70.40" x2="266.77" y2="270.60" stroke="#0c8c8c" stroke-width="0.7" stroke-dasharray="1.5 1.65" stroke-opacity="0.8"/>
<line x1="294.05" y1="70.40" x2="294.05" y2="270.60" stroke="#0c8c8c" stroke-width="0.7" stroke-dasharray="1.5 1.65" stroke-opacity="0.8"/>
<line x1="321.33" y1="70.40" x2="321.33" y2="270.60" stroke="#0c8c8c" stroke-width="0.7" stroke-dasharray="1.5 1.65" stroke-opacity="0.8"/>
<line x1="348.61" y1="70.40" x2="348.61" y2="270.60" stroke="#0c8c8c" stroke-width="0.7" stroke-dasharray="1.5 1.65" stroke-opacity="0.8"/>
<line x1="375.89" y1="70.40" x2="375.89" y2="270.60" stroke="#0c8c8c" stroke-width="0.7" stroke-dasharray="1.5 1.65" stroke-opacity="0.8"/>
<line x1="403.17" y1="70.40" x2="403.17" y2="270.60" stroke="#0c8c8c" stroke-width="0.7" stroke-dasharray="1.5 1.65" stroke-opacity="0.8"/>
<line x1="430.45" y1="70.40" x2="430.45" y2="270.60" stroke="#0c8c8c" stroke-width="0.7" stroke-dasharray="1.5 1.65" stroke-opacity="0.8"/>
<line x1="457.73" y1="70.40" x2="457.73" y2="270.60" stroke="#0c8c8c" stroke-width="0.7" stroke-dasharray="1.5 1.65" stroke-opacity="0.8"/>
<line x1="485.01" y1="70.40" x2="485.01" y2="270.60" stroke="#0c8c8c" stroke-width="0.7" stroke-dasharray="1.5 1.65" stroke-opacity="0.8"/>
<line x1="512.29" y1="70.40" x2="512.29" y2="270.60" stroke="#0c8c8c" stroke-width="0.7" stroke-dasharray="1.5 1.65" stroke-opacity="0.8"/>
<line x1="539.57" y1="70.40" x2="539.57" y2="270.60" stroke="#0c8c8c" stroke-width="0.7" stroke-dasharray="1.5 1.65" stroke-opacity="0.8"/>
<line x1="566.85" y1="70.40" x2="566.85" y2="270.60" stroke="#0c8c8c" stroke-width="0.7" stroke-dasharray="1.5 1.65" stroke-opacity="0.8"/>
<line x1="594.13" y1="70.40" x2="594.13" y2="270.60" stroke="#0c8c8c" stroke-width="0.7" stroke-dasharray="1.5 1.65" stroke-opacity="0.8"/>
<line x1="621.41" y1="70.40" x2="621.41" y2="270.60" stroke="#0c8c8c" stroke-width="0.7" stroke-dasharray="1.5 1.65" stroke-opacity="0.8"/>
<line x1="648.69" y1="70.40" x2="648.69" y2="270.60" stroke="#0c8c8c" stroke-width="0.7" stroke-dasharray="1.5 1.65" stroke-opacity="0.8"/>
<line x1="675.97" y1="70.40" x2="675.97" y2="270.60" stroke="#0c8c8c" stroke-width="0.7" stroke-dasharray="1.5 1.65" stroke-opacity="0.8"/>
<line x1="204.40" y1="70.40" x2="204.40" y2="270.60" stroke="#10e010" stroke-width="0.9" />
<line x1="209.90" y1="70.40" x2="209.90" y2="270.60" stroke="#a8a800" stroke-width="0.9" />
<path d="M-319.05 96.4H-313.91V90.6H-308.77V96.4H-293.35V90.6H-288.21V96.4H-283.07V90.6H-272.79V96.4H-267.65V90.6H-262.51V96.4H-236.81V90.6H-226.53V96.4H-200.83V90.6H-195.69V96.4H-169.99V90.6H-164.85V96.4H-139.15V90.6H-134.01V96.4H-123.73V90.6H-118.59V96.4H-92.89V90.6H-87.75V96.4H-82.61V90.6H-77.47V96.4H-51.77V90.6H-46.63V96.4H-36.35V90.6H-20.93V96.4H-10.65V90.6H9.91V96.4H35.61V90.6H40.75V96.4H45.89V90.6H51.03V96.4H56.17V90.6H66.45V96.4H97.31V90.6H154.40V96.4H159.54V90.6H164.68V96.4H180.10V90.6H185.24V96.4H190.38V90.6H200.66V96.4H205.80V90.6H210.94V96.4H236.64V90.6H246.92V96.4H272.62V90.6H277.76V96.4H303.46V90.6H308.60V96.4H334.30V90.6H339.44V96.4H349.72V90.6H354.86V96.4H380.56V90.6H385.70V96.4H390.84V90.6H395.98V96.4H421.68V90.6H426.82V96.4H437.10V90.6H452.52V96.4H462.80V90.6H483.36V96.4H509.06V90.6H514.20V96.4H519.34V90.6H524.48V96.4H529.62V90.6H539.90V96.4H570.76V90.6H627.85V96.4H632.99V90.6H638.13V96.4H653.55V90.6H658.69V96.4H663.83V90.6H674.11V96.4H679.25V90.6H684.39V96.4H710.09V90.6H720.37V96.4H746.07V90.6H751.21V96.4H776.91V90.6H782.05V96.4H807.75V90.6H812.89V96.4H823.17V90.6H828.31V96.4H854.01V90.6H859.15V96.4H864.29V90.6H869.43V96.4H895.13V90.6H900.27V96.4H910.55V90.6H925.97V96.4H936.25V90.6H956.81V96.4H982.51V90.6H987.65V96.4H992.79V90.6H997.93V96.4H1003.07V90.6H1013.35V96.4H1044.21V90.6H1101.30" fill="none" stroke="#f4f4f4" stroke-width="1.1" stroke-linejoin="miter"/>
<rect x="544.18" y="91.60" width="22.30" height="4.20" fill="#000" />
<text x="555.33" y="96.30" font-family="Liberation Sans, sans-serif" font-size="5.4" font-weight="normal" fill="#c8c8c8" text-anchor="middle"  stroke="#c8c8c8" stroke-width="0.1">36.3 us</text>
<rect x="585.25" y="91.60" width="28.10" height="4.20" fill="#000" />
<text x="599.30" y="96.30" font-family="Liberation Sans, sans-serif" font-size="5.4" font-weight="normal" fill="#c8c8c8" text-anchor="middle"  stroke="#c8c8c8" stroke-width="0.1">66.645 us</text>
<rect x="212.54" y="91.40" width="22.70" height="4.40" fill="#000" />
<rect x="211.14" y="90.20" width="1.60" height="7.00" fill="#000090" />
<text x="213.54" y="96.30" font-family="Liberation Sans, sans-serif" font-size="5.4" font-weight="normal" fill="#c8c8c8" text-anchor="start" textLength="20.96" lengthAdjust="spacingAndGlyphs"  stroke="#c8c8c8" stroke-width="0.1">30.24 us</text>
<rect x="248.52" y="91.40" width="22.70" height="4.40" fill="#000" />
<text x="249.52" y="96.30" font-family="Liberation Sans, sans-serif" font-size="5.4" font-weight="normal" fill="#c8c8c8" text-anchor="start" textLength="22.30" lengthAdjust="spacingAndGlyphs"  stroke="#c8c8c8" stroke-width="0.1">30.245 us</text>
<rect x="279.36" y="91.40" width="22.70" height="4.40" fill="#000" />
<text x="280.36" y="96.30" font-family="Liberation Sans, sans-serif" font-size="5.4" font-weight="normal" fill="#c8c8c8" text-anchor="start" textLength="20.96" lengthAdjust="spacingAndGlyphs"  stroke="#c8c8c8" stroke-width="0.1">30.25 us</text>
<rect x="310.20" y="91.40" width="22.70" height="4.40" fill="#000" />
<text x="311.20" y="96.30" font-family="Liberation Sans, sans-serif" font-size="5.4" font-weight="normal" fill="#c8c8c8" text-anchor="start" textLength="22.30" lengthAdjust="spacingAndGlyphs"  stroke="#c8c8c8" stroke-width="0.1">30.245 us</text>
<rect x="356.46" y="91.40" width="22.70" height="4.40" fill="#000" />
<text x="357.46" y="96.30" font-family="Liberation Sans, sans-serif" font-size="5.4" font-weight="normal" fill="#c8c8c8" text-anchor="start" textLength="20.96" lengthAdjust="spacingAndGlyphs"  stroke="#c8c8c8" stroke-width="0.1">30.24 us</text>
<rect x="397.58" y="91.40" width="22.70" height="4.40" fill="#000" />
<text x="398.58" y="96.30" font-family="Liberation Sans, sans-serif" font-size="5.4" font-weight="normal" fill="#c8c8c8" text-anchor="start" textLength="22.30" lengthAdjust="spacingAndGlyphs"  stroke="#c8c8c8" stroke-width="0.1">30.245 us</text>
<rect x="484.96" y="91.40" width="22.70" height="4.40" fill="#000" />
<text x="485.96" y="96.30" font-family="Liberation Sans, sans-serif" font-size="5.4" font-weight="normal" fill="#c8c8c8" text-anchor="start" textLength="22.30" lengthAdjust="spacingAndGlyphs"  stroke="#c8c8c8" stroke-width="0.1">30.245 us</text>
<path d="M154.75 81.65C154.75 78.65 155.50 74.3 156.25 74.3H157.69C158.44 74.3 159.19 78.65 159.19 81.65C159.19 84.65 158.44 89.0 157.69 89.0H156.25C155.50 89.0 154.75 84.65 154.75 81.65Z" fill="#000" stroke="#d8d8d8" stroke-width="0.7"/>
<path d="M159.89 81.65C159.89 78.65 160.69 74.3 161.49 74.3H214.13C214.93 74.3 215.73 78.65 215.73 81.65C215.73 84.65 214.93 89.0 214.13 89.0H161.49C160.69 89.0 159.89 84.65 159.89 81.65Z" fill="#ffcc99" stroke="#f4f4f4" stroke-width="0.5"/>
<text x="187.81" y="83.50" font-family="Liberation Sans, sans-serif" font-size="5.15" font-weight="normal" fill="#1c140c" text-anchor="middle"  stroke="#1c140c" stroke-width="0.2">BaseID:45A</text>
<path d="M216.43 81.65C216.43 78.65 217.18 74.3 217.93 74.3H219.37C220.12 74.3 220.87 78.65 220.87 81.65C220.87 84.65 220.12 89.0 219.37 89.0H217.93C217.18 89.0 216.43 84.65 216.43 81.65Z" fill="#000" stroke="#d8d8d8" stroke-width="0.7"/>
<path d="M221.57 81.65C221.57 78.65 222.32 74.3 223.07 74.3H224.51C225.26 74.3 226.01 78.65 226.01 81.65C226.01 84.65 225.26 89.0 224.51 89.0H223.07C222.32 89.0 221.57 84.65 221.57 81.65Z" fill="#000" stroke="#d8d8d8" stroke-width="0.7"/>
<path d="M226.71 81.65C226.71 78.65 227.46 74.3 228.21 74.3H229.65C230.40 74.3 231.15 78.65 231.15 81.65C231.15 84.65 230.40 89.0 229.65 89.0H228.21C227.46 89.0 226.71 84.65 226.71 81.65Z" fill="#000" stroke="#d8d8d8" stroke-width="0.7"/>
<path d="M231.85 81.65C231.85 78.65 232.65 74.3 233.45 74.3H255.25C256.05 74.3 256.85 78.65 256.85 81.65C256.85 84.65 256.05 89.0 255.25 89.0H233.45C232.65 89.0 231.85 84.65 231.85 81.65Z" fill="#ffff99" stroke="#f4f4f4" stroke-width="0.5"/>
<text x="244.35" y="83.50" font-family="Liberation Sans, sans-serif" font-size="5.15" font-weight="normal" fill="#14140a" text-anchor="middle"  stroke="#14140a" stroke-width="0.2">DLC:4</text>
<path d="M257.55 81.65C257.55 78.65 258.35 74.3 259.15 74.3H301.51C302.31 74.3 303.11 78.65 303.11 81.65C303.11 84.65 302.31 89.0 301.51 89.0H259.15C258.35 89.0 257.55 84.65 257.55 81.65Z" fill="#ccffcc" stroke="#f4f4f4" stroke-width="0.5"/>
<text x="280.33" y="83.50" font-family="Liberation Sans, sans-serif" font-size="5.15" font-weight="normal" fill="#0c140c" text-anchor="middle"  stroke="#0c140c" stroke-width="0.2">DAT:00</text>
<path d="M303.81 81.65C303.81 78.65 304.56 74.3 305.31 74.3H306.75C307.50 74.3 308.25 78.65 308.25 81.65C308.25 84.65 307.50 89.0 306.75 89.0H305.31C304.56 89.0 303.81 84.65 303.81 81.65Z" fill="#000" stroke="#d8d8d8" stroke-width="0.7"/>
<path d="M308.95 81.65C308.95 78.65 309.75 74.3 310.55 74.3H352.91C353.71 74.3 354.51 78.65 354.51 81.65C354.51 84.65 353.71 89.0 352.91 89.0H310.55C309.75 89.0 308.95 84.65 308.95 81.65Z" fill="#ccffcc" stroke="#f4f4f4" stroke-width="0.5"/>
<text x="331.73" y="83.50" font-family="Liberation Sans, sans-serif" font-size="5.15" font-weight="normal" fill="#0c140c" text-anchor="middle"  stroke="#0c140c" stroke-width="0.2">DAT:01</text>
<path d="M355.21 81.65C355.21 78.65 356.01 74.3 356.81 74.3H399.17C399.97 74.3 400.77 78.65 400.77 81.65C400.77 84.65 399.97 89.0 399.17 89.0H356.81C356.01 89.0 355.21 84.65 355.21 81.65Z" fill="#ccffcc" stroke="#f4f4f4" stroke-width="0.5"/>
<text x="377.99" y="83.50" font-family="Liberation Sans, sans-serif" font-size="5.15" font-weight="normal" fill="#0c140c" text-anchor="middle"  stroke="#0c140c" stroke-width="0.2">DAT:02</text>
<path d="M401.47 81.65C401.47 78.65 402.27 74.3 403.07 74.3H445.43C446.23 74.3 447.03 78.65 447.03 81.65C447.03 84.65 446.23 89.0 445.43 89.0H403.07C402.27 89.0 401.47 84.65 401.47 81.65Z" fill="#ccffcc" stroke="#f4f4f4" stroke-width="0.5"/>
<text x="424.25" y="83.50" font-family="Liberation Sans, sans-serif" font-size="5.15" font-weight="normal" fill="#0c140c" text-anchor="middle"  stroke="#0c140c" stroke-width="0.2">DAT:03</text>
<path d="M447.73 81.65C447.73 78.65 448.53 74.3 449.33 74.3H527.67C528.47 74.3 529.27 78.65 529.27 81.65C529.27 84.65 528.47 89.0 527.67 89.0H449.33C448.53 89.0 447.73 84.65 447.73 81.65Z" fill="#ccffff" stroke="#f4f4f4" stroke-width="0.5"/>
<text x="488.50" y="83.50" font-family="Liberation Sans, sans-serif" font-size="5.15" font-weight="normal" fill="#0c1414" text-anchor="middle"  stroke="#0c1414" stroke-width="0.2">CRC:4F02</text>
<path d="M529.97 81.65C529.97 78.65 530.72 74.3 531.47 74.3H532.91C533.66 74.3 534.41 78.65 534.41 81.65C534.41 84.65 533.66 89.0 532.91 89.0H531.47C530.72 89.0 529.97 84.65 529.97 81.65Z" fill="#000" stroke="#d8d8d8" stroke-width="0.7"/>
<path d="M535.11 81.65C535.11 78.65 535.86 74.3 536.61 74.3H538.05C538.80 74.3 539.55 78.65 539.55 81.65C539.55 84.65 538.80 89.0 538.05 89.0H536.61C535.86 89.0 535.11 84.65 535.11 81.65Z" fill="#000" stroke="#d8d8d8" stroke-width="0.7"/>
<path d="M540.25 81.65C540.25 78.65 541.05 74.3 541.85 74.3H568.81C569.61 74.3 570.41 78.65 570.41 81.65C570.41 84.65 569.61 89.0 568.81 89.0H541.85C541.05 89.0 540.25 84.65 540.25 81.65Z" fill="#00ffff" stroke="#f4f4f4" stroke-width="0.5"/>
<text x="555.33" y="83.50" font-family="Liberation Sans, sans-serif" font-size="5.15" font-weight="normal" fill="#005050" text-anchor="middle"  stroke="#005050" stroke-width="0.2">Passive Err</text>
<path d="M571.11 81.65C571.11 78.65 571.91 74.3 572.71 74.3H625.90C626.70 74.3 627.50 78.65 627.50 81.65C627.50 84.65 626.70 89.0 625.90 89.0H572.71C571.91 89.0 571.11 84.65 571.11 81.65Z" fill="#000" stroke="#d8d8d8" stroke-width="0.7"/>
<text x="599.31" y="83.50" font-family="Liberation Sans, sans-serif" font-size="5.15" font-weight="normal" fill="#f0f0f0" text-anchor="middle"  stroke="#f0f0f0" stroke-width="0.2">Idle</text>
<path d="M628.20 81.65C628.20 78.65 628.95 74.3 629.70 74.3H631.14C631.89 74.3 632.64 78.65 632.64 81.65C632.64 84.65 631.89 89.0 631.14 89.0H629.70C628.95 89.0 628.20 84.65 628.20 81.65Z" fill="#000" stroke="#d8d8d8" stroke-width="0.7"/>
<path d="M633.34 81.65C633.34 78.65 634.14 74.3 634.94 74.3H687.58C688.38 74.3 689.18 78.65 689.18 81.65C689.18 84.65 688.38 89.0 687.58 89.0H634.94C634.14 89.0 633.34 84.65 633.34 81.65Z" fill="#ffcc99" stroke="#f4f4f4" stroke-width="0.5"/>
<text x="661.26" y="83.50" font-family="Liberation Sans, sans-serif" font-size="5.15" font-weight="normal" fill="#1c140c" text-anchor="middle"  stroke="#1c140c" stroke-width="0.2">BaseID:45A</text>
<path d="M689.88 81.65C689.88 78.65 690.63 74.3 691.38 74.3H692.82C693.57 74.3 694.32 78.65 694.32 81.65C694.32 84.65 693.57 89.0 692.82 89.0H691.38C690.63 89.0 689.88 84.65 689.88 81.65Z" fill="#000" stroke="#d8d8d8" stroke-width="0.7"/>
<path d="M695.02 81.65C695.02 78.65 695.77 74.3 696.52 74.3H697.96C698.71 74.3 699.46 78.65 699.46 81.65C699.46 84.65 698.71 89.0 697.96 89.0H696.52C695.77 89.0 695.02 84.65 695.02 81.65Z" fill="#000" stroke="#d8d8d8" stroke-width="0.7"/>
<path d="M700.16 81.65C700.16 78.65 700.91 74.3 701.66 74.3H703.10C703.85 74.3 704.60 78.65 704.60 81.65C704.60 84.65 703.85 89.0 703.10 89.0H701.66C700.91 89.0 700.16 84.65 700.16 81.65Z" fill="#000" stroke="#d8d8d8" stroke-width="0.7"/>
<path d="M705.30 81.65C705.30 78.65 706.10 74.3 706.90 74.3H728.70C729.50 74.3 730.30 78.65 730.30 81.65C730.30 84.65 729.50 89.0 728.70 89.0H706.90C706.10 89.0 705.30 84.65 705.30 81.65Z" fill="#ffff99" stroke="#f4f4f4" stroke-width="0.5"/>
<text x="717.80" y="83.50" font-family="Liberation Sans, sans-serif" font-size="5.15" font-weight="normal" fill="#14140a" text-anchor="middle"  stroke="#14140a" stroke-width="0.2">DLC:4</text>
<path d="M731.00 81.65C731.00 78.65 731.80 74.3 732.60 74.3H774.96C775.76 74.3 776.56 78.65 776.56 81.65C776.56 84.65 775.76 89.0 774.96 89.0H732.60C731.80 89.0 731.00 84.65 731.00 81.65Z" fill="#ccffcc" stroke="#f4f4f4" stroke-width="0.5"/>
<text x="753.78" y="83.50" font-family="Liberation Sans, sans-serif" font-size="5.15" font-weight="normal" fill="#0c140c" text-anchor="middle"  stroke="#0c140c" stroke-width="0.2">DAT:00</text>
<path d="M777.26 81.65C777.26 78.65 778.01 74.3 778.76 74.3H780.20C780.95 74.3 781.70 78.65 781.70 81.65C781.70 84.65 780.95 89.0 780.20 89.0H778.76C778.01 89.0 777.26 84.65 777.26 81.65Z" fill="#000" stroke="#d8d8d8" stroke-width="0.7"/>
<path d="M782.40 81.65C782.40 78.65 783.20 74.3 784.00 74.3H826.36C827.16 74.3 827.96 78.65 827.96 81.65C827.96 84.65 827.16 89.0 826.36 89.0H784.00C783.20 89.0 782.40 84.65 782.40 81.65Z" fill="#ccffcc" stroke="#f4f4f4" stroke-width="0.5"/>
<text x="805.18" y="83.50" font-family="Liberation Sans, sans-serif" font-size="5.15" font-weight="normal" fill="#0c140c" text-anchor="middle"  stroke="#0c140c" stroke-width="0.2">DAT:01</text>
<path d="M828.66 81.65C828.66 78.65 829.46 74.3 830.26 74.3H872.62C873.42 74.3 874.22 78.65 874.22 81.65C874.22 84.65 873.42 89.0 872.62 89.0H830.26C829.46 89.0 828.66 84.65 828.66 81.65Z" fill="#ccffcc" stroke="#f4f4f4" stroke-width="0.5"/>
<text x="851.44" y="83.50" font-family="Liberation Sans, sans-serif" font-size="5.15" font-weight="normal" fill="#0c140c" text-anchor="middle"  stroke="#0c140c" stroke-width="0.2">DAT:02</text>
<path d="M874.92 81.65C874.92 78.65 875.72 74.3 876.52 74.3H918.88C919.68 74.3 920.48 78.65 920.48 81.65C920.48 84.65 919.68 89.0 918.88 89.0H876.52C875.72 89.0 874.92 84.65 874.92 81.65Z" fill="#ccffcc" stroke="#f4f4f4" stroke-width="0.5"/>
<text x="897.70" y="83.50" font-family="Liberation Sans, sans-serif" font-size="5.15" font-weight="normal" fill="#0c140c" text-anchor="middle"  stroke="#0c140c" stroke-width="0.2">DAT:03</text>
<path d="M921.18 81.65C921.18 78.65 921.98 74.3 922.78 74.3H1001.12C1001.92 74.3 1002.72 78.65 1002.72 81.65C1002.72 84.65 1001.92 89.0 1001.12 89.0H922.78C921.98 89.0 921.18 84.65 921.18 81.65Z" fill="#ccffff" stroke="#f4f4f4" stroke-width="0.5"/>
<text x="961.95" y="83.50" font-family="Liberation Sans, sans-serif" font-size="5.15" font-weight="normal" fill="#0c1414" text-anchor="middle"  stroke="#0c1414" stroke-width="0.2">CRC:4F02</text>
<path d="M1003.42 81.65C1003.42 78.65 1004.17 74.3 1004.92 74.3H1006.36C1007.11 74.3 1007.86 78.65 1007.86 81.65C1007.86 84.65 1007.11 89.0 1006.36 89.0H1004.92C1004.17 89.0 1003.42 84.65 1003.42 81.65Z" fill="#000" stroke="#d8d8d8" stroke-width="0.7"/>
<path d="M1008.56 81.65C1008.56 78.65 1009.31 74.3 1010.06 74.3H1011.50C1012.25 74.3 1013.00 78.65 1013.00 81.65C1013.00 84.65 1012.25 89.0 1011.50 89.0H1010.06C1009.31 89.0 1008.56 84.65 1008.56 81.65Z" fill="#000" stroke="#d8d8d8" stroke-width="0.7"/>
<path d="M1013.70 81.65C1013.70 78.65 1014.50 74.3 1015.30 74.3H1042.26C1043.06 74.3 1043.86 78.65 1043.86 81.65C1043.86 84.65 1043.06 89.0 1042.26 89.0H1015.30C1014.50 89.0 1013.70 84.65 1013.70 81.65Z" fill="#00ffff" stroke="#f4f4f4" stroke-width="0.5"/>
<text x="1028.78" y="83.50" font-family="Liberation Sans, sans-serif" font-size="5.15" font-weight="normal" fill="#005050" text-anchor="middle"  stroke="#005050" stroke-width="0.2">Passive Err</text>
<path d="M1044.56 81.65C1044.56 78.65 1045.36 74.3 1046.16 74.3H1099.35C1100.15 74.3 1100.95 78.65 1100.95 81.65C1100.95 84.65 1100.15 89.0 1099.35 89.0H1046.16C1045.36 89.0 1044.56 84.65 1044.56 81.65Z" fill="#000" stroke="#d8d8d8" stroke-width="0.7"/>
<text x="1072.75" y="83.50" font-family="Liberation Sans, sans-serif" font-size="5.15" font-weight="normal" fill="#f0f0f0" text-anchor="middle"  stroke="#f0f0f0" stroke-width="0.2">Idle</text>
<clipPath id="dc"><rect x="157.8" y="73.6" width="530" height="16"/></clipPath>
<g clip-path="url(#dc)" style="mix-blend-mode:difference">
<line x1="157.65" y1="70.40" x2="157.65" y2="270.60" stroke="#00a0a0" stroke-width="0.8" stroke-dasharray="1.6 1.6"/>
<line x1="184.93" y1="70.40" x2="184.93" y2="270.60" stroke="#00a0a0" stroke-width="0.8" stroke-dasharray="1.6 1.6"/>
<line x1="212.21" y1="70.40" x2="212.21" y2="270.60" stroke="#00a0a0" stroke-width="0.8" stroke-dasharray="1.6 1.6"/>
<line x1="239.49" y1="70.40" x2="239.49" y2="270.60" stroke="#00a0a0" stroke-width="0.8" stroke-dasharray="1.6 1.6"/>
<line x1="266.77" y1="70.40" x2="266.77" y2="270.60" stroke="#00a0a0" stroke-width="0.8" stroke-dasharray="1.6 1.6"/>
<line x1="294.05" y1="70.40" x2="294.05" y2="270.60" stroke="#00a0a0" stroke-width="0.8" stroke-dasharray="1.6 1.6"/>
<line x1="321.33" y1="70.40" x2="321.33" y2="270.60" stroke="#00a0a0" stroke-width="0.8" stroke-dasharray="1.6 1.6"/>
<line x1="348.61" y1="70.40" x2="348.61" y2="270.60" stroke="#00a0a0" stroke-width="0.8" stroke-dasharray="1.6 1.6"/>
<line x1="375.89" y1="70.40" x2="375.89" y2="270.60" stroke="#00a0a0" stroke-width="0.8" stroke-dasharray="1.6 1.6"/>
<line x1="403.17" y1="70.40" x2="403.17" y2="270.60" stroke="#00a0a0" stroke-width="0.8" stroke-dasharray="1.6 1.6"/>
<line x1="430.45" y1="70.40" x2="430.45" y2="270.60" stroke="#00a0a0" stroke-width="0.8" stroke-dasharray="1.6 1.6"/>
<line x1="457.73" y1="70.40" x2="457.73" y2="270.60" stroke="#00a0a0" stroke-width="0.8" stroke-dasharray="1.6 1.6"/>
<line x1="485.01" y1="70.40" x2="485.01" y2="270.60" stroke="#00a0a0" stroke-width="0.8" stroke-dasharray="1.6 1.6"/>
<line x1="512.29" y1="70.40" x2="512.29" y2="270.60" stroke="#00a0a0" stroke-width="0.8" stroke-dasharray="1.6 1.6"/>
<line x1="539.57" y1="70.40" x2="539.57" y2="270.60" stroke="#00a0a0" stroke-width="0.8" stroke-dasharray="1.6 1.6"/>
<line x1="566.85" y1="70.40" x2="566.85" y2="270.60" stroke="#00a0a0" stroke-width="0.8" stroke-dasharray="1.6 1.6"/>
<line x1="594.13" y1="70.40" x2="594.13" y2="270.60" stroke="#00a0a0" stroke-width="0.8" stroke-dasharray="1.6 1.6"/>
<line x1="621.41" y1="70.40" x2="621.41" y2="270.60" stroke="#00a0a0" stroke-width="0.8" stroke-dasharray="1.6 1.6"/>
<line x1="648.69" y1="70.40" x2="648.69" y2="270.60" stroke="#00a0a0" stroke-width="0.8" stroke-dasharray="1.6 1.6"/>
<line x1="675.97" y1="70.40" x2="675.97" y2="270.60" stroke="#00a0a0" stroke-width="0.8" stroke-dasharray="1.6 1.6"/>
<line x1="204.40" y1="70.40" x2="204.40" y2="270.60" stroke="#10e010" stroke-width="0.65" />
<line x1="209.90" y1="70.40" x2="209.90" y2="270.60" stroke="#d8d800" stroke-width="0.6" />
</g>
</g>
<rect x="156.60" y="70.40" width="1.20" height="200.20" fill="#d0d0d0" />
<rect x="688.40" y="71.40" width="9.40" height="199.20" fill="#f6f6f6" />
<rect x="688.60" y="71.60" width="9.00" height="8.60" fill="#f0f0f0" stroke="#fff" stroke-width="0.5"/>
<line x1="697.40" y1="71.60" x2="697.40" y2="80.20" stroke="#696969" stroke-width="1" />
<line x1="688.60" y1="80.00" x2="697.60" y2="80.00" stroke="#696969" stroke-width="1" />
<line x1="696.50" y1="72.40" x2="696.50" y2="79.40" stroke="#a8a8a8" stroke-width="0.7" />
<line x1="689.40" y1="79.10" x2="696.80" y2="79.10" stroke="#a8a8a8" stroke-width="0.7" />
<path d="M691.1 76.9h4l-2-2.4z" fill="#000"/>
<rect x="688.60" y="80.40" width="9.00" height="90.00" fill="#f0f0f0" stroke="#fff" stroke-width="0.5"/>
<line x1="697.40" y1="80.40" x2="697.40" y2="170.40" stroke="#696969" stroke-width="1" />
<line x1="688.60" y1="170.20" x2="697.60" y2="170.20" stroke="#696969" stroke-width="1" />
<line x1="696.50" y1="81.20" x2="696.50" y2="169.60" stroke="#a8a8a8" stroke-width="0.7" />
<line x1="689.40" y1="169.30" x2="696.80" y2="169.30" stroke="#a8a8a8" stroke-width="0.7" />
<rect x="688.60" y="261.60" width="9.00" height="8.80" fill="#f0f0f0" stroke="#fff" stroke-width="0.5"/>
<line x1="697.40" y1="261.60" x2="697.40" y2="270.40" stroke="#696969" stroke-width="1" />
<line x1="688.60" y1="270.20" x2="697.60" y2="270.20" stroke="#696969" stroke-width="1" />
<line x1="696.50" y1="262.40" x2="696.50" y2="269.60" stroke="#a8a8a8" stroke-width="0.7" />
<line x1="689.40" y1="269.30" x2="696.80" y2="269.30" stroke="#a8a8a8" stroke-width="0.7" />
<path d="M691.1 265.0h4l-2 2.4z" fill="#000"/>
<rect x="4.20" y="273.20" width="21.60" height="9.80" fill="url(#btn)" stroke="#e4e4e4" stroke-width="0.5" rx="0.6"/>
<line x1="4.70" y1="283.10" x2="26.00" y2="283.10" stroke="#9c9c9c" stroke-width="0.7" />
<line x1="25.90" y1="273.80" x2="25.90" y2="283.20" stroke="#9c9c9c" stroke-width="0.7" />
<line x1="4.70" y1="282.30" x2="25.20" y2="282.30" stroke="#d0d0d0" stroke-width="0.6" />
<line x1="25.10" y1="274.00" x2="25.10" y2="282.40" stroke="#d0d0d0" stroke-width="0.6" />
<text x="7.60" y="280.60" font-family="Liberation Sans, sans-serif" font-size="6.9" font-weight="normal" fill="#181818" text-anchor="start" textLength="15.20" lengthAdjust="spacingAndGlyphs" >Label</text>
<rect x="59.40" y="273.20" width="29.20" height="9.80" fill="url(#btn)" stroke="#e4e4e4" stroke-width="0.5" rx="0.6"/>
<line x1="59.90" y1="283.10" x2="88.80" y2="283.10" stroke="#9c9c9c" stroke-width="0.7" />
<line x1="88.70" y1="273.80" x2="88.70" y2="283.20" stroke="#9c9c9c" stroke-width="0.7" />
<line x1="59.90" y1="282.30" x2="88.00" y2="282.30" stroke="#d0d0d0" stroke-width="0.6" />
<line x1="87.90" y1="274.00" x2="87.90" y2="282.40" stroke="#d0d0d0" stroke-width="0.6" />
<text x="62.00" y="280.60" font-family="Liberation Sans, sans-serif" font-size="6.9" font-weight="normal" fill="#181818" text-anchor="start" textLength="23.80" lengthAdjust="spacingAndGlyphs" >Channel</text>
<rect x="97.00" y="273.20" width="21.80" height="9.80" fill="url(#btn)" stroke="#e4e4e4" stroke-width="0.5" rx="0.6"/>
<line x1="97.50" y1="283.10" x2="119.00" y2="283.10" stroke="#9c9c9c" stroke-width="0.7" />
<line x1="118.90" y1="273.80" x2="118.90" y2="283.20" stroke="#9c9c9c" stroke-width="0.7" />
<line x1="97.50" y1="282.30" x2="118.20" y2="282.30" stroke="#d0d0d0" stroke-width="0.6" />
<line x1="118.10" y1="274.00" x2="118.10" y2="282.40" stroke="#d0d0d0" stroke-width="0.6" />
<text x="99.80" y="280.60" font-family="Liberation Sans, sans-serif" font-size="6.9" font-weight="normal" fill="#181818" text-anchor="start" textLength="15.80" lengthAdjust="spacingAndGlyphs" >Value</text>
<clipPath id="acc"><rect x="135" y="272" width="10.9" height="12"/></clipPath><clipPath id="trc"><rect x="146" y="272" width="11.2" height="12"/></clipPath>
<g clip-path="url(#acc)">
<rect x="135.00" y="273.20" width="15.00" height="9.80" fill="url(#btn)" stroke="#e4e4e4" stroke-width="0.5" rx="0.6"/>
<line x1="135.50" y1="283.10" x2="150.20" y2="283.10" stroke="#9c9c9c" stroke-width="0.7" />
<line x1="150.10" y1="273.80" x2="150.10" y2="283.20" stroke="#9c9c9c" stroke-width="0.7" />
<line x1="135.50" y1="282.30" x2="149.40" y2="282.30" stroke="#d0d0d0" stroke-width="0.6" />
<line x1="149.30" y1="274.00" x2="149.30" y2="282.40" stroke="#d0d0d0" stroke-width="0.6" />
<text x="137.60" y="280.60" font-family="Liberation Sans, sans-serif" font-size="6.9" font-weight="normal" fill="#181818" text-anchor="start" textLength="10.40" lengthAdjust="spacingAndGlyphs" >Act</text>
</g>
<g clip-path="url(#trc)">
<rect x="146.20" y="273.20" width="17.80" height="9.80" fill="url(#btn)" stroke="#e4e4e4" stroke-width="0.5" rx="0.6"/>
<line x1="146.70" y1="283.10" x2="164.20" y2="283.10" stroke="#9c9c9c" stroke-width="0.7" />
<line x1="164.10" y1="273.80" x2="164.10" y2="283.20" stroke="#9c9c9c" stroke-width="0.7" />
<line x1="146.70" y1="282.30" x2="163.40" y2="282.30" stroke="#d0d0d0" stroke-width="0.6" />
<line x1="163.30" y1="274.00" x2="163.30" y2="282.40" stroke="#d0d0d0" stroke-width="0.6" />
<text x="150.00" y="280.60" font-family="Liberation Sans, sans-serif" font-size="6.9" font-weight="normal" fill="#181818" text-anchor="start" textLength="10.60" lengthAdjust="spacingAndGlyphs" >Trig</text>
</g>
<rect x="157.40" y="273.00" width="530.00" height="7.80" fill="#f7f7f7" />
<rect x="157.60" y="273.20" width="10.80" height="7.40" fill="#f0f0f0" stroke="#fff" stroke-width="0.5"/>
<line x1="168.20" y1="273.20" x2="168.20" y2="280.60" stroke="#696969" stroke-width="1" />
<line x1="157.60" y1="280.40" x2="168.40" y2="280.40" stroke="#696969" stroke-width="1" />
<line x1="167.30" y1="274.00" x2="167.30" y2="279.80" stroke="#a8a8a8" stroke-width="0.7" />
<line x1="158.40" y1="279.50" x2="167.60" y2="279.50" stroke="#a8a8a8" stroke-width="0.7" />
<path d="M163.8 275.4v3l-1.9-1.5z" fill="#000"/>
<rect x="676.60" y="273.20" width="10.80" height="7.40" fill="#f0f0f0" stroke="#fff" stroke-width="0.5"/>
<line x1="687.20" y1="273.20" x2="687.20" y2="280.60" stroke="#696969" stroke-width="1" />
<line x1="676.60" y1="280.40" x2="687.40" y2="280.40" stroke="#696969" stroke-width="1" />
<line x1="686.30" y1="274.00" x2="686.30" y2="279.80" stroke="#a8a8a8" stroke-width="0.7" />
<line x1="677.40" y1="279.50" x2="686.60" y2="279.50" stroke="#a8a8a8" stroke-width="0.7" />
<path d="M681.2 275.4v3l1.9-1.5z" fill="#000"/>
<rect x="194.20" y="273.20" width="6.20" height="7.40" fill="#f0f0f0" stroke="#fff" stroke-width="0.5"/>
<line x1="200.20" y1="273.20" x2="200.20" y2="280.60" stroke="#696969" stroke-width="1" />
<line x1="194.20" y1="280.40" x2="200.40" y2="280.40" stroke="#696969" stroke-width="1" />
<line x1="199.30" y1="274.00" x2="199.30" y2="279.80" stroke="#a8a8a8" stroke-width="0.7" />
<line x1="195.00" y1="279.50" x2="199.60" y2="279.50" stroke="#a8a8a8" stroke-width="0.7" />
<rect x="3.00" y="287.00" width="694.00" height="18.60" fill="#696969" />
<rect x="3.00" y="287.00" width="694.00" height="2.70" fill="#747474" />
<rect x="3.00" y="289.70" width="694.00" height="6.00" fill="#fbfbfb" />
<rect x="3.00" y="296.90" width="694.00" height="1.20" fill="#8c8c8c" />
<rect x="3.00" y="298.20" width="694.00" height="7.40" fill="#5c5c5c" />
<path d="M4.6 290.4h0.8v4.6h-0.8zM6.6 290.4h0.9v4.6h-0.9zM8.6 290.4h0.9v4.6h-0.9zM11.2 290.4h0.7v4.6h-0.7zM13.2 290.4h0.5v4.6h-0.5zM15.5 290.4h0.7v4.6h-0.7zM17.8 290.4h0.5v4.6h-0.5zM19.5 290.4h0.6v4.6h-0.6zM21.3 290.4h0.5v4.6h-0.5zM23.9 290.4h0.5v4.6h-0.5zM25.6 290.4h0.5v4.6h-0.5zM28.5 290.4h0.6v4.6h-0.6zM30.4 290.4h0.7v4.6h-0.7zM33.0 290.4h0.9v4.6h-0.9zM35.1 290.4h0.6v4.6h-0.6zM37.4 290.4h0.6v4.6h-0.6z" fill="#484848" fill-opacity="0.8"/>
<path d="M48.4 290.4h0.8v4.6h-0.8zM50.5 290.4h0.8v4.6h-0.8zM55.9 292.1h0.7v1.1h-0.7zM58.1 290.4h0.7v4.6h-0.7zM60.0 290.4h0.5v4.6h-0.5zM63.8 290.4h0.7v4.6h-0.7zM65.6 290.4h0.6v4.6h-0.6zM67.2 290.4h0.8v4.6h-0.8zM73.8 290.4h0.5v4.6h-0.5zM76.6 292.1h0.7v1.1h-0.7zM78.2 290.4h0.7v4.6h-0.7zM79.7 290.4h0.6v4.6h-0.6zM83.2 290.4h0.7v4.6h-0.7zM91.2 290.4h0.8v4.6h-0.8zM93.9 292.1h0.7v1.1h-0.7zM95.9 290.4h0.6v4.6h-0.6zM101.5 290.4h0.5v4.6h-0.5zM102.8 290.4h0.9v4.6h-0.9zM104.6 290.4h0.9v4.6h-0.9zM108.8 290.4h0.5v4.6h-0.5zM110.4 290.4h0.6v4.6h-0.6zM111.9 290.4h0.5v4.6h-0.5zM116.9 292.1h0.7v1.1h-0.7zM119.4 290.4h0.5v4.6h-0.5zM122.4 292.1h0.7v1.1h-0.7zM123.9 290.4h0.9v4.6h-0.9zM127.7 292.1h0.7v1.1h-0.7zM129.8 290.4h0.5v4.6h-0.5zM136.0 292.1h0.7v1.1h-0.7zM137.9 290.4h0.5v4.6h-0.5zM145.2 290.4h0.5v4.6h-0.5zM148.6 292.1h0.7v1.1h-0.7zM150.5 290.4h0.6v4.6h-0.6zM151.8 290.4h0.5v4.6h-0.5zM155.5 290.4h0.6v4.6h-0.6zM157.1 290.4h0.9v4.6h-0.9zM163.6 290.4h0.7v4.6h-0.7zM168.2 290.4h0.5v4.6h-0.5zM169.9 290.4h0.9v4.6h-0.9zM171.6 290.4h0.9v4.6h-0.9zM175.3 292.1h0.7v1.1h-0.7zM178.4 290.4h0.7v4.6h-0.7zM182.4 292.1h0.7v1.1h-0.7zM185.3 290.4h0.7v4.6h-0.7zM187.0 290.4h0.9v4.6h-0.9zM189.1 290.4h0.5v4.6h-0.5zM195.6 290.4h0.6v4.6h-0.6zM198.6 292.1h0.7v1.1h-0.7zM200.3 290.4h0.6v4.6h-0.6zM201.6 290.4h0.6v4.6h-0.6zM205.4 292.1h0.7v1.1h-0.7zM209.6 290.4h0.9v4.6h-0.9zM211.5 290.4h0.8v4.6h-0.8zM214.2 292.1h0.7v1.1h-0.7zM216.0 290.4h0.8v4.6h-0.8zM218.0 290.4h0.5v4.6h-0.5zM223.7 290.4h0.5v4.6h-0.5zM225.0 290.4h0.7v4.6h-0.7zM228.8 290.4h0.8v4.6h-0.8zM230.3 290.4h0.9v4.6h-0.9zM232.1 290.4h0.5v4.6h-0.5zM235.9 290.4h0.9v4.6h-0.9zM237.5 290.4h0.7v4.6h-0.7zM240.4 292.1h0.7v1.1h-0.7zM243.9 290.4h0.5v4.6h-0.5zM251.9 290.4h0.6v4.6h-0.6zM253.8 290.4h0.8v4.6h-0.8zM255.5 290.4h0.7v4.6h-0.7zM259.1 292.1h0.7v1.1h-0.7zM261.6 290.4h0.7v4.6h-0.7zM265.9 292.1h0.7v1.1h-0.7zM268.2 290.4h0.6v4.6h-0.6zM269.5 290.4h0.6v4.6h-0.6zM273.1 292.1h0.7v1.1h-0.7zM274.1 290.4h0.9v4.6h-0.9zM275.9 290.4h0.6v4.6h-0.6zM277.4 290.4h0.6v4.6h-0.6zM284.7 290.4h0.8v4.6h-0.8zM288.1 292.1h0.7v1.1h-0.7zM291.1 290.4h0.6v4.6h-0.6zM293.0 290.4h0.5v4.6h-0.5zM300.6 290.4h0.7v4.6h-0.7zM303.7 292.1h0.7v1.1h-0.7zM305.1 290.4h0.8v4.6h-0.8zM306.9 290.4h0.8v4.6h-0.8zM312.3 290.4h0.8v4.6h-0.8zM313.8 290.4h0.8v4.6h-0.8zM319.0 290.4h0.7v4.6h-0.7zM323.6 290.4h0.6v4.6h-0.6zM324.9 290.4h0.5v4.6h-0.5zM330.5 290.4h0.7v4.6h-0.7zM332.1 290.4h0.5v4.6h-0.5zM333.4 290.4h0.8v4.6h-0.8zM340.3 290.4h0.8v4.6h-0.8zM341.9 290.4h0.6v4.6h-0.6zM343.4 290.4h0.8v4.6h-0.8zM349.9 290.4h0.8v4.6h-0.8zM351.9 290.4h0.6v4.6h-0.6zM356.3 292.1h0.7v1.1h-0.7zM359.4 290.4h0.7v4.6h-0.7zM363.8 292.1h0.7v1.1h-0.7zM365.1 290.4h0.7v4.6h-0.7zM366.8 290.4h0.5v4.6h-0.5zM374.2 290.4h0.5v4.6h-0.5zM375.5 290.4h0.6v4.6h-0.6zM376.9 290.4h0.6v4.6h-0.6zM382.4 292.1h0.7v1.1h-0.7zM385.0 290.4h0.6v4.6h-0.6zM388.8 292.1h0.7v1.1h-0.7zM390.3 290.4h0.9v4.6h-0.9zM392.0 290.4h0.8v4.6h-0.8zM396.0 290.4h0.6v4.6h-0.6zM397.7 290.4h0.5v4.6h-0.5zM399.0 290.4h0.7v4.6h-0.7zM406.6 290.4h0.7v4.6h-0.7zM408.5 290.4h0.8v4.6h-0.8zM414.7 290.4h0.7v4.6h-0.7zM416.5 290.4h0.8v4.6h-0.8zM418.4 290.4h0.6v4.6h-0.6zM425.7 290.4h0.6v4.6h-0.6zM429.3 292.1h0.7v1.1h-0.7zM431.5 290.4h0.7v4.6h-0.7zM433.2 290.4h0.7v4.6h-0.7zM437.6 292.1h0.7v1.1h-0.7zM441.0 290.4h0.5v4.6h-0.5zM442.3 290.4h0.5v4.6h-0.5zM444.0 290.4h0.7v4.6h-0.7zM448.2 292.1h0.7v1.1h-0.7zM451.5 290.4h0.5v4.6h-0.5zM453.0 290.4h0.8v4.6h-0.8zM456.6 292.1h0.7v1.1h-0.7zM459.2 290.4h0.5v4.6h-0.5zM460.5 290.4h0.8v4.6h-0.8zM462.6 290.4h0.5v4.6h-0.5zM465.9 290.4h0.6v4.6h-0.6zM467.4 290.4h0.7v4.6h-0.7zM471.6 292.1h0.7v1.1h-0.7zM474.2 290.4h0.8v4.6h-0.8zM476.1 290.4h0.8v4.6h-0.8zM482.5 290.4h0.5v4.6h-0.5zM483.8 290.4h0.7v4.6h-0.7zM485.7 290.4h0.7v4.6h-0.7zM492.3 290.4h0.9v4.6h-0.9zM496.2 292.1h0.7v1.1h-0.7zM497.8 290.4h0.5v4.6h-0.5zM502.0 292.1h0.7v1.1h-0.7zM505.7 290.4h0.5v4.6h-0.5zM507.1 290.4h0.6v4.6h-0.6zM509.0 290.4h0.7v4.6h-0.7zM513.7 290.4h0.5v4.6h-0.5zM518.8 290.4h0.5v4.6h-0.5zM520.4 290.4h0.8v4.6h-0.8zM523.8 292.1h0.7v1.1h-0.7zM527.2 290.4h0.5v4.6h-0.5zM533.6 290.4h0.5v4.6h-0.5zM534.9 290.4h0.5v4.6h-0.5zM543.1 290.4h0.7v4.6h-0.7zM546.3 292.1h0.7v1.1h-0.7zM549.7 290.4h0.7v4.6h-0.7zM551.4 290.4h0.6v4.6h-0.6zM555.1 290.4h0.5v4.6h-0.5zM556.4 290.4h0.6v4.6h-0.6zM558.0 290.4h0.6v4.6h-0.6zM562.7 292.1h0.7v1.1h-0.7zM564.6 290.4h0.9v4.6h-0.9zM566.6 290.4h0.8v4.6h-0.8zM571.2 292.1h0.7v1.1h-0.7zM573.4 290.4h0.7v4.6h-0.7zM575.0 290.4h0.8v4.6h-0.8zM576.7 290.4h0.5v4.6h-0.5zM581.1 290.4h0.9v4.6h-0.9zM588.3 290.4h0.6v4.6h-0.6zM592.3 290.4h0.6v4.6h-0.6zM593.7 290.4h0.8v4.6h-0.8zM598.3 292.1h0.7v1.1h-0.7zM601.9 290.4h0.6v4.6h-0.6zM603.3 290.4h0.6v4.6h-0.6zM604.8 290.4h0.5v4.6h-0.5zM607.7 292.1h0.7v1.1h-0.7zM610.5 290.4h0.9v4.6h-0.9zM612.1 290.4h0.7v4.6h-0.7zM615.0 292.1h0.7v1.1h-0.7zM617.1 290.4h0.7v4.6h-0.7zM619.9 292.1h0.7v1.1h-0.7zM621.7 290.4h0.7v4.6h-0.7zM623.7 290.4h0.7v4.6h-0.7zM625.7 290.4h0.7v4.6h-0.7zM630.0 290.4h0.8v4.6h-0.8zM632.0 290.4h0.6v4.6h-0.6zM633.9 290.4h0.6v4.6h-0.6zM638.9 292.1h0.7v1.1h-0.7zM641.6 290.4h0.9v4.6h-0.9zM643.4 290.4h0.7v4.6h-0.7zM647.2 292.1h0.7v1.1h-0.7zM648.8 290.4h0.9v4.6h-0.9zM650.8 290.4h0.8v4.6h-0.8zM652.3 290.4h0.8v4.6h-0.8zM656.9 292.1h0.7v1.1h-0.7zM659.0 290.4h0.9v4.6h-0.9zM663.2 290.4h0.9v4.6h-0.9zM664.9 290.4h0.9v4.6h-0.9zM666.7 290.4h0.7v4.6h-0.7zM670.7 292.1h0.7v1.1h-0.7zM671.7 290.4h0.9v4.6h-0.9zM673.4 290.4h0.9v4.6h-0.9zM675.1 290.4h0.8v4.6h-0.8zM679.1 292.1h0.7v1.1h-0.7zM680.5 290.4h0.7v4.6h-0.7zM681.9 290.4h0.6v4.6h-0.6zM685.8 292.1h0.7v1.1h-0.7zM687.7 290.4h0.6v4.6h-0.6zM690.4 292.1h0.7v1.1h-0.7z" fill="#404040" fill-opacity="0.85"/>
<rect x="690.60" y="290.20" width="5.60" height="5.00" fill="#777" />
<rect x="38.90" y="287.00" width="7.80" height="18.60" fill="#000" />
<rect x="38.90" y="289.70" width="7.80" height="6.00" fill="#8a8a8a" />
<line x1="3.80" y1="287.00" x2="3.80" y2="305.60" stroke="#9a3030" stroke-width="1.4" />
<rect x="3.00" y="287.00" width="2.20" height="1.00" fill="#f01010" />
<line x1="7.60" y1="287.00" x2="7.60" y2="305.60" stroke="#10d8e8" stroke-width="0.9" />
<line x1="10.30" y1="287.00" x2="10.30" y2="305.60" stroke="#e020e0" stroke-width="0.9" />
<line x1="38.70" y1="287.00" x2="38.70" y2="305.60" stroke="#10e010" stroke-width="0.9" />
<rect x="0.00" y="308.60" width="656.00" height="2.60" fill="#f2f3f6" />
<rect x="0.00" y="311.00" width="656.00" height="14.40" fill="url(#tb2)" />
<line x1="0.00" y1="325.60" x2="656.00" y2="325.60" stroke="#d8dcea" stroke-width="0.6" />
<g transform="translate(7.6,317.6)"><circle r="3.6" fill="#f6f8ee" stroke="#58a030" stroke-width="1.3"/><path d="M0-1.8v3.6M-1.8 0h3.6M-1.3-1.3l2.6 2.6M1.3-1.3l-2.6 2.6" stroke="#b8c8a0" stroke-width="0.6" fill="none"/></g>
<path d="M15.6 314.6v7" stroke="#e05828" stroke-width="1.5"/><path d="M14.2 315.4l1.4-2.6l1.4 2.6z" fill="#e05828"/>
<path d="M18.5 314.6v7" stroke="#e05828" stroke-width="1.5"/><path d="M17.1 315.4l1.4-2.6l1.4 2.6z" fill="#e05828"/>
<path d="M21.4 314.6v7" stroke="#e05828" stroke-width="1.5"/><path d="M20.0 315.4l1.4-2.6l1.4 2.6z" fill="#e05828"/>
<text x="28.00" y="316.60" font-family="Liberation Sans, sans-serif" font-size="5.2" font-weight="bold" fill="#a4a4a4" text-anchor="start" textLength="15.20" lengthAdjust="spacingAndGlyphs" >CH-00</text>
<rect x="27.00" y="317.80" width="18.20" height="5.60" fill="#b0b0b0" />
<text x="28.40" y="322.60" font-family="Liberation Sans, sans-serif" font-size="5.2" font-weight="bold" fill="#f6f6f6" text-anchor="start" textLength="15.20" lengthAdjust="spacingAndGlyphs" >CH-01</text>
<text x="51.00" y="316.60" font-family="Liberation Sans, sans-serif" font-size="5.2" font-weight="bold" fill="#2834e0" text-anchor="start" textLength="15.20" lengthAdjust="spacingAndGlyphs" >CH-00</text>
<line x1="50.00" y1="317.60" x2="68.00" y2="317.60" stroke="#9098c0" stroke-width="0.5" />
<text x="51.00" y="322.60" font-family="Liberation Sans, sans-serif" font-size="5.2" font-weight="bold" fill="#2834e0" text-anchor="start" textLength="15.20" lengthAdjust="spacingAndGlyphs" >CH-00</text>
<path d="M73 321.6h2.6v-8.2h4.2v8.2h3.8v-8.2h4.2v8.2h2.6" fill="none" stroke="#dc2818" stroke-width="1.5"/>
<path d="M75.6 319l-1.3-1.8h2.6zM79.8 316.4l-1.3 1.8h2.6zM83.6 319l-1.3-1.8h2.6zM87.8 316.4l-1.3 1.8h2.6z" fill="#f08828"/>
<rect x="96.40" y="311.60" width="1.60" height="11.00" fill="#8a8a8a" />
<rect x="96.40" y="311.60" width="0.56" height="11.00" fill="#a0a0a0" />
<rect x="100.00" y="312.60" width="3.80" height="10.00" fill="#6a6a6a" />
<rect x="100.00" y="312.60" width="1.33" height="10.00" fill="#a0a0a0" />
<rect x="104.90" y="314.20" width="3.60" height="8.40" fill="#5a5a5a" />
<rect x="104.90" y="314.20" width="1.26" height="8.40" fill="#a0a0a0" />
<rect x="109.40" y="316.60" width="3.20" height="6.00" fill="#606060" />
<rect x="109.40" y="316.60" width="1.12" height="6.00" fill="#a0a0a0" />
<line x1="95.60" y1="322.80" x2="113.40" y2="322.80" stroke="#9a9a9a" stroke-width="0.5" />
<rect x="117.60" y="310.80" width="20.20" height="12.60" fill="#dce8f8" stroke="#a0b8e0" stroke-width="0.5"/>
<path d="M118.6 312.4c3 0 3.4 9.6 6 9.6h6.6c2.6 0 3-9.6 6-9.6M118.6 322c3 0 3.4-9.6 6-9.6h6.6c2.6 0 3 9.6 6 9.6" fill="none" stroke="#2c6ccc" stroke-width="0.9"/>
<rect x="122.60" y="314.80" width="9.80" height="6.00" fill="#fff" stroke="#333" stroke-width="0.5"/>
<text x="127.50" y="319.60" font-family="Liberation Sans, sans-serif" font-size="4.7" font-weight="normal" fill="#111" text-anchor="middle"  stroke="#111" stroke-width="0.1">Bus</text>
<rect x="141.00" y="311.40" width="103.60" height="10.80" fill="#fff" />
<line x1="140.80" y1="311.30" x2="244.60" y2="311.30" stroke="#6c6c6c" stroke-width="0.8" />
<line x1="141.00" y1="311.30" x2="141.00" y2="322.20" stroke="#6c6c6c" stroke-width="0.8" />
<line x1="141.00" y1="322.30" x2="244.80" y2="322.30" stroke="#e4e4e4" stroke-width="0.7" />
<line x1="244.70" y1="311.30" x2="244.70" y2="322.30" stroke="#e4e4e4" stroke-width="0.7" />
<text x="143.60" y="319.80" font-family="Liberation Sans, sans-serif" font-size="7.3" font-weight="normal" fill="#181818" text-anchor="start" textLength="33.80" lengthAdjust="spacingAndGlyphs" >CANL(CAN)</text>
<rect x="233.20" y="312.20" width="11.00" height="9.60" fill="#f0f0f0" />
<line x1="233.20" y1="312.20" x2="244.20" y2="312.20" stroke="#fff" stroke-width="0.6" />
<line x1="233.20" y1="312.20" x2="233.20" y2="321.80" stroke="#fff" stroke-width="0.6" />
<line x1="233.20" y1="321.70" x2="244.30" y2="321.70" stroke="#6c6c6c" stroke-width="0.9" />
<line x1="244.10" y1="312.20" x2="244.10" y2="321.80" stroke="#6c6c6c" stroke-width="0.9" />
<path d="M236.4 316.8h3.8l-1.9 2.4z" fill="#000"/>
<rect x="3.20" y="326.40" width="685.00" height="57.40" fill="#fff" />
<rect x="3.20" y="326.40" width="685.00" height="9.80" fill="#f1f1f1" />
<line x1="3.20" y1="336.30" x2="688.20" y2="336.30" stroke="#c8c8c8" stroke-width="0.7" />
<line x1="3.20" y1="326.40" x2="688.20" y2="326.40" stroke="#8a8a8a" stroke-width="0.8" />
<line x1="3.20" y1="326.40" x2="3.20" y2="383.80" stroke="#8a8a8a" stroke-width="0.8" />
<text x="7.00" y="334.00" font-family="Liberation Mono, monospace" font-size="6.3" font-weight="normal" fill="#222" text-anchor="start" textLength="34.02" lengthAdjust="spacingAndGlyphs"  stroke="#222" stroke-width="0.1">Timestamp</text>
<text x="72.50" y="334.00" font-family="Liberation Mono, monospace" font-size="6.3" font-weight="normal" fill="#222" text-anchor="start" textLength="37.80" lengthAdjust="spacingAndGlyphs"  stroke="#222" stroke-width="0.1">Frame Type</text>
<text x="121.40" y="334.00" font-family="Liberation Mono, monospace" font-size="6.3" font-weight="normal" fill="#222" text-anchor="start" textLength="7.56" lengthAdjust="spacingAndGlyphs"  stroke="#222" stroke-width="0.1">ID</text>
<text x="203.20" y="334.00" font-family="Liberation Mono, monospace" font-size="6.3" font-weight="normal" fill="#222" text-anchor="start" textLength="11.34" lengthAdjust="spacingAndGlyphs"  stroke="#222" stroke-width="0.1">DLC</text>
<text x="224.80" y="334.00" font-family="Liberation Mono, monospace" font-size="6.3" font-weight="normal" fill="#222" text-anchor="start" textLength="15.12" lengthAdjust="spacingAndGlyphs"  stroke="#222" stroke-width="0.1">Data</text>
<text x="339.80" y="334.00" font-family="Liberation Mono, monospace" font-size="6.3" font-weight="normal" fill="#222" text-anchor="start" textLength="22.68" lengthAdjust="spacingAndGlyphs"  stroke="#222" stroke-width="0.1">CRC(h)</text>
<text x="372.30" y="334.00" font-family="Liberation Mono, monospace" font-size="6.3" font-weight="normal" fill="#222" text-anchor="start" textLength="41.58" lengthAdjust="spacingAndGlyphs"  stroke="#222" stroke-width="0.1">ASCII(Data)</text>
<text x="437.80" y="334.00" font-family="Liberation Mono, monospace" font-size="6.3" font-weight="normal" fill="#222" text-anchor="start" textLength="41.58" lengthAdjust="spacingAndGlyphs"  stroke="#222" stroke-width="0.1">Information</text>
<text x="562.80" y="334.00" font-family="Liberation Mono, monospace" font-size="6.3" font-weight="normal" fill="#222" text-anchor="start" textLength="52.92" lengthAdjust="spacingAndGlyphs"  stroke="#222" stroke-width="0.1">Frame Duration</text>
<line x1="68.70" y1="327.00" x2="68.70" y2="336.00" stroke="#bcbcbc" stroke-width="0.8" />
<line x1="69.50" y1="327.00" x2="69.50" y2="336.00" stroke="#fff" stroke-width="0.7" />
<line x1="68.70" y1="337.00" x2="68.70" y2="382.20" stroke="#ececec" stroke-width="0.6" />
<line x1="117.60" y1="327.00" x2="117.60" y2="336.00" stroke="#bcbcbc" stroke-width="0.8" />
<line x1="118.40" y1="327.00" x2="118.40" y2="336.00" stroke="#fff" stroke-width="0.7" />
<line x1="117.60" y1="337.00" x2="117.60" y2="382.20" stroke="#ececec" stroke-width="0.6" />
<line x1="199.40" y1="327.00" x2="199.40" y2="336.00" stroke="#bcbcbc" stroke-width="0.8" />
<line x1="200.20" y1="327.00" x2="200.20" y2="336.00" stroke="#fff" stroke-width="0.7" />
<line x1="199.40" y1="337.00" x2="199.40" y2="382.20" stroke="#ececec" stroke-width="0.6" />
<line x1="221.00" y1="327.00" x2="221.00" y2="336.00" stroke="#bcbcbc" stroke-width="0.8" />
<line x1="221.80" y1="327.00" x2="221.80" y2="336.00" stroke="#fff" stroke-width="0.7" />
<line x1="221.00" y1="337.00" x2="221.00" y2="382.20" stroke="#ececec" stroke-width="0.6" />
<line x1="336.00" y1="327.00" x2="336.00" y2="336.00" stroke="#bcbcbc" stroke-width="0.8" />
<line x1="336.80" y1="327.00" x2="336.80" y2="336.00" stroke="#fff" stroke-width="0.7" />
<line x1="336.00" y1="337.00" x2="336.00" y2="382.20" stroke="#ececec" stroke-width="0.6" />
<line x1="368.50" y1="327.00" x2="368.50" y2="336.00" stroke="#bcbcbc" stroke-width="0.8" />
<line x1="369.30" y1="327.00" x2="369.30" y2="336.00" stroke="#fff" stroke-width="0.7" />
<line x1="368.50" y1="337.00" x2="368.50" y2="382.20" stroke="#ececec" stroke-width="0.6" />
<line x1="434.00" y1="327.00" x2="434.00" y2="336.00" stroke="#bcbcbc" stroke-width="0.8" />
<line x1="434.80" y1="327.00" x2="434.80" y2="336.00" stroke="#fff" stroke-width="0.7" />
<line x1="434.00" y1="337.00" x2="434.00" y2="382.20" stroke="#ececec" stroke-width="0.6" />
<line x1="559.00" y1="327.00" x2="559.00" y2="336.00" stroke="#bcbcbc" stroke-width="0.8" />
<line x1="559.80" y1="327.00" x2="559.80" y2="336.00" stroke="#fff" stroke-width="0.7" />
<line x1="559.00" y1="337.00" x2="559.00" y2="382.20" stroke="#ececec" stroke-width="0.6" />
<line x1="618.60" y1="327.00" x2="618.60" y2="336.00" stroke="#bcbcbc" stroke-width="0.8" />
<line x1="619.40" y1="327.00" x2="619.40" y2="336.00" stroke="#fff" stroke-width="0.7" />
<line x1="618.60" y1="337.00" x2="618.60" y2="382.20" stroke="#ececec" stroke-width="0.6" />
<rect x="118.20" y="338.10" width="81.20" height="8.68" fill="#ffcc99" />
<rect x="199.80" y="338.10" width="21.20" height="8.68" fill="#ffff99" />
<rect x="221.40" y="338.10" width="114.60" height="8.68" fill="#ccffcc" />
<rect x="336.40" y="338.10" width="32.10" height="8.68" fill="#ccffff" />
<line x1="3.20" y1="346.78" x2="688.20" y2="346.78" stroke="#f0f0f0" stroke-width="0.5" />
<line x1="118.20" y1="346.78" x2="368.50" y2="346.78" stroke="#ffffff" stroke-width="0.5" stroke-opacity="0.55"/>
<text x="9.00" y="344.70" font-family="Liberation Mono, monospace" font-size="6.3" font-weight="normal" fill="#222" text-anchor="start" textLength="41.58" lengthAdjust="spacingAndGlyphs"  stroke="#222" stroke-width="0.1">2.282475 ms</text>
<text x="72.60" y="344.70" font-family="Liberation Mono, monospace" font-size="6.3" font-weight="normal" fill="#222" text-anchor="start" textLength="18.90" lengthAdjust="spacingAndGlyphs"  stroke="#222" stroke-width="0.1">Error</text>
<text x="121.80" y="344.70" font-family="Liberation Mono, monospace" font-size="6.3" font-weight="normal" fill="#222" text-anchor="start" textLength="11.34" lengthAdjust="spacingAndGlyphs"  stroke="#222" stroke-width="0.1">45A</text>
<text x="203.20" y="344.70" font-family="Liberation Mono, monospace" font-size="6.3" font-weight="normal" fill="#222" text-anchor="start"  stroke="#222" stroke-width="0.1">4</text>
<text x="225.00" y="344.70" font-family="Liberation Mono, monospace" font-size="6.3" font-weight="normal" fill="#222" text-anchor="start" textLength="41.58" lengthAdjust="spacingAndGlyphs"  stroke="#222" stroke-width="0.1">00 01 02 03</text>
<text x="340.00" y="344.70" font-family="Liberation Mono, monospace" font-size="6.3" font-weight="normal" fill="#222" text-anchor="start" textLength="15.12" lengthAdjust="spacingAndGlyphs"  stroke="#222" stroke-width="0.1">4F02</text>
<text x="437.80" y="344.70" font-family="Liberation Mono, monospace" font-size="6.3" font-weight="normal" fill="#e03838" text-anchor="start" textLength="117.18" lengthAdjust="spacingAndGlyphs"  stroke="#e03838" stroke-width="0.1">Data Rate: 166 Kbps/ACK Error/P</text>
<rect x="118.20" y="346.78" width="81.20" height="8.68" fill="#ffcc99" />
<rect x="199.80" y="346.78" width="21.20" height="8.68" fill="#ffff99" />
<rect x="221.40" y="346.78" width="114.60" height="8.68" fill="#ccffcc" />
<rect x="336.40" y="346.78" width="32.10" height="8.68" fill="#ccffff" />
<line x1="3.20" y1="355.46" x2="688.20" y2="355.46" stroke="#f0f0f0" stroke-width="0.5" />
<line x1="118.20" y1="355.46" x2="368.50" y2="355.46" stroke="#ffffff" stroke-width="0.5" stroke-opacity="0.55"/>
<text x="9.00" y="353.38" font-family="Liberation Mono, monospace" font-size="6.3" font-weight="normal" fill="#222" text-anchor="start" textLength="41.58" lengthAdjust="spacingAndGlyphs"  stroke="#222" stroke-width="0.1">2.839475 ms</text>
<text x="72.60" y="353.38" font-family="Liberation Mono, monospace" font-size="6.3" font-weight="normal" fill="#222" text-anchor="start" textLength="18.90" lengthAdjust="spacingAndGlyphs"  stroke="#222" stroke-width="0.1">Error</text>
<text x="121.80" y="353.38" font-family="Liberation Mono, monospace" font-size="6.3" font-weight="normal" fill="#222" text-anchor="start" textLength="11.34" lengthAdjust="spacingAndGlyphs"  stroke="#222" stroke-width="0.1">45A</text>
<text x="203.20" y="353.38" font-family="Liberation Mono, monospace" font-size="6.3" font-weight="normal" fill="#222" text-anchor="start"  stroke="#222" stroke-width="0.1">4</text>
<text x="225.00" y="353.38" font-family="Liberation Mono, monospace" font-size="6.3" font-weight="normal" fill="#222" text-anchor="start" textLength="41.58" lengthAdjust="spacingAndGlyphs"  stroke="#222" stroke-width="0.1">00 01 02 03</text>
<text x="340.00" y="353.38" font-family="Liberation Mono, monospace" font-size="6.3" font-weight="normal" fill="#222" text-anchor="start" textLength="15.12" lengthAdjust="spacingAndGlyphs"  stroke="#222" stroke-width="0.1">4F02</text>
<text x="437.80" y="353.38" font-family="Liberation Mono, monospace" font-size="6.3" font-weight="normal" fill="#e03838" text-anchor="start" textLength="109.62" lengthAdjust="spacingAndGlyphs"  stroke="#e03838" stroke-width="0.1">ACK Error/Passive Error Frame</text>
<rect x="118.20" y="355.46" width="81.20" height="8.68" fill="#ffcc99" />
<rect x="199.80" y="355.46" width="21.20" height="8.68" fill="#ffff99" />
<rect x="221.40" y="355.46" width="114.60" height="8.68" fill="#ccffcc" />
<rect x="336.40" y="355.46" width="32.10" height="8.68" fill="#ccffff" />
<line x1="3.20" y1="364.14" x2="688.20" y2="364.14" stroke="#f0f0f0" stroke-width="0.5" />
<line x1="118.20" y1="364.14" x2="368.50" y2="364.14" stroke="#ffffff" stroke-width="0.5" stroke-opacity="0.55"/>
<text x="9.00" y="362.06" font-family="Liberation Mono, monospace" font-size="6.3" font-weight="normal" fill="#222" text-anchor="start" textLength="37.80" lengthAdjust="spacingAndGlyphs"  stroke="#222" stroke-width="0.1">3.39645 ms</text>
<text x="72.60" y="362.06" font-family="Liberation Mono, monospace" font-size="6.3" font-weight="normal" fill="#222" text-anchor="start" textLength="18.90" lengthAdjust="spacingAndGlyphs"  stroke="#222" stroke-width="0.1">Error</text>
<text x="121.80" y="362.06" font-family="Liberation Mono, monospace" font-size="6.3" font-weight="normal" fill="#222" text-anchor="start" textLength="11.34" lengthAdjust="spacingAndGlyphs"  stroke="#222" stroke-width="0.1">45A</text>
<text x="203.20" y="362.06" font-family="Liberation Mono, monospace" font-size="6.3" font-weight="normal" fill="#222" text-anchor="start"  stroke="#222" stroke-width="0.1">4</text>
<text x="225.00" y="362.06" font-family="Liberation Mono, monospace" font-size="6.3" font-weight="normal" fill="#222" text-anchor="start" textLength="41.58" lengthAdjust="spacingAndGlyphs"  stroke="#222" stroke-width="0.1">00 01 02 03</text>
<text x="340.00" y="362.06" font-family="Liberation Mono, monospace" font-size="6.3" font-weight="normal" fill="#222" text-anchor="start" textLength="15.12" lengthAdjust="spacingAndGlyphs"  stroke="#222" stroke-width="0.1">4F02</text>
<text x="437.80" y="362.06" font-family="Liberation Mono, monospace" font-size="6.3" font-weight="normal" fill="#e03838" text-anchor="start" textLength="109.62" lengthAdjust="spacingAndGlyphs"  stroke="#e03838" stroke-width="0.1">ACK Error/Passive Error Frame</text>
<rect x="118.20" y="364.14" width="81.20" height="8.68" fill="#ffcc99" />
<rect x="199.80" y="364.14" width="21.20" height="8.68" fill="#ffff99" />
<rect x="221.40" y="364.14" width="114.60" height="8.68" fill="#ccffcc" />
<rect x="336.40" y="364.14" width="32.10" height="8.68" fill="#ccffff" />
<line x1="3.20" y1="372.82" x2="688.20" y2="372.82" stroke="#f0f0f0" stroke-width="0.5" />
<line x1="118.20" y1="372.82" x2="368.50" y2="372.82" stroke="#ffffff" stroke-width="0.5" stroke-opacity="0.55"/>
<text x="9.00" y="370.74" font-family="Liberation Mono, monospace" font-size="6.3" font-weight="normal" fill="#222" text-anchor="start" textLength="37.80" lengthAdjust="spacingAndGlyphs"  stroke="#222" stroke-width="0.1">3.95339 ms</text>
<text x="72.60" y="370.74" font-family="Liberation Mono, monospace" font-size="6.3" font-weight="normal" fill="#222" text-anchor="start" textLength="18.90" lengthAdjust="spacingAndGlyphs"  stroke="#222" stroke-width="0.1">Error</text>
<text x="121.80" y="370.74" font-family="Liberation Mono, monospace" font-size="6.3" font-weight="normal" fill="#222" text-anchor="start" textLength="11.34" lengthAdjust="spacingAndGlyphs"  stroke="#222" stroke-width="0.1">45A</text>
<text x="203.20" y="370.74" font-family="Liberation Mono, monospace" font-size="6.3" font-weight="normal" fill="#222" text-anchor="start"  stroke="#222" stroke-width="0.1">4</text>
<text x="225.00" y="370.74" font-family="Liberation Mono, monospace" font-size="6.3" font-weight="normal" fill="#222" text-anchor="start" textLength="41.58" lengthAdjust="spacingAndGlyphs"  stroke="#222" stroke-width="0.1">00 01 02 03</text>
<text x="340.00" y="370.74" font-family="Liberation Mono, monospace" font-size="6.3" font-weight="normal" fill="#222" text-anchor="start" textLength="15.12" lengthAdjust="spacingAndGlyphs"  stroke="#222" stroke-width="0.1">4F02</text>
<text x="437.80" y="370.74" font-family="Liberation Mono, monospace" font-size="6.3" font-weight="normal" fill="#e03838" text-anchor="start" textLength="109.62" lengthAdjust="spacingAndGlyphs"  stroke="#e03838" stroke-width="0.1">ACK Error/Passive Error Frame</text>
<rect x="118.20" y="372.82" width="81.20" height="8.68" fill="#ffcc99" />
<rect x="199.80" y="372.82" width="21.20" height="8.68" fill="#ffff99" />
<rect x="221.40" y="372.82" width="114.60" height="8.68" fill="#ccffcc" />
<rect x="336.40" y="372.82" width="32.10" height="8.68" fill="#ccffff" />
<line x1="3.20" y1="381.50" x2="688.20" y2="381.50" stroke="#f0f0f0" stroke-width="0.5" />
<line x1="118.20" y1="381.50" x2="368.50" y2="381.50" stroke="#ffffff" stroke-width="0.5" stroke-opacity="0.55"/>
<text x="9.00" y="379.42" font-family="Liberation Mono, monospace" font-size="6.3" font-weight="normal" fill="#222" text-anchor="start" textLength="37.80" lengthAdjust="spacingAndGlyphs"  stroke="#222" stroke-width="0.1">4.51037 ms</text>
<text x="72.60" y="379.42" font-family="Liberation Mono, monospace" font-size="6.3" font-weight="normal" fill="#222" text-anchor="start" textLength="18.90" lengthAdjust="spacingAndGlyphs"  stroke="#222" stroke-width="0.1">Error</text>
<text x="121.80" y="379.42" font-family="Liberation Mono, monospace" font-size="6.3" font-weight="normal" fill="#222" text-anchor="start" textLength="11.34" lengthAdjust="spacingAndGlyphs"  stroke="#222" stroke-width="0.1">45A</text>
<text x="203.20" y="379.42" font-family="Liberation Mono, monospace" font-size="6.3" font-weight="normal" fill="#222" text-anchor="start"  stroke="#222" stroke-width="0.1">4</text>
<text x="225.00" y="379.42" font-family="Liberation Mono, monospace" font-size="6.3" font-weight="normal" fill="#222" text-anchor="start" textLength="41.58" lengthAdjust="spacingAndGlyphs"  stroke="#222" stroke-width="0.1">00 01 02 03</text>
<text x="340.00" y="379.42" font-family="Liberation Mono, monospace" font-size="6.3" font-weight="normal" fill="#222" text-anchor="start" textLength="15.12" lengthAdjust="spacingAndGlyphs"  stroke="#222" stroke-width="0.1">4F02</text>
<text x="437.80" y="379.42" font-family="Liberation Mono, monospace" font-size="6.3" font-weight="normal" fill="#e03838" text-anchor="start" textLength="109.62" lengthAdjust="spacingAndGlyphs"  stroke="#e03838" stroke-width="0.1">ACK Error/Passive Error Frame</text>
<path d="M4.6 341.4l4 4.6h-3.2z" fill="#e8d820"/>
<rect x="688.40" y="326.60" width="9.40" height="57.20" fill="#f6f6f6" />
<rect x="688.60" y="327.00" width="9.00" height="9.00" fill="#f0f0f0" stroke="#fff" stroke-width="0.5"/>
<line x1="697.40" y1="327.00" x2="697.40" y2="336.00" stroke="#696969" stroke-width="1" />
<line x1="688.60" y1="335.80" x2="697.60" y2="335.80" stroke="#696969" stroke-width="1" />
<line x1="696.50" y1="327.80" x2="696.50" y2="335.20" stroke="#a8a8a8" stroke-width="0.7" />
<line x1="689.40" y1="334.90" x2="696.80" y2="334.90" stroke="#a8a8a8" stroke-width="0.7" />
<path d="M691.1 332.5h4l-2-2.4z" fill="#909090"/>
<rect x="688.60" y="341.40" width="9.00" height="5.60" fill="#f0f0f0" stroke="#fff" stroke-width="0.5"/>
<line x1="697.40" y1="341.40" x2="697.40" y2="347.00" stroke="#696969" stroke-width="1" />
<line x1="688.60" y1="346.80" x2="697.60" y2="346.80" stroke="#696969" stroke-width="1" />
<line x1="696.50" y1="342.20" x2="696.50" y2="346.20" stroke="#a8a8a8" stroke-width="0.7" />
<line x1="689.40" y1="345.90" x2="696.80" y2="345.90" stroke="#a8a8a8" stroke-width="0.7" />
<rect x="688.60" y="374.40" width="9.00" height="9.00" fill="#f0f0f0" stroke="#fff" stroke-width="0.5"/>
<line x1="697.40" y1="374.40" x2="697.40" y2="383.40" stroke="#696969" stroke-width="1" />
<line x1="688.60" y1="383.20" x2="697.60" y2="383.20" stroke="#696969" stroke-width="1" />
<line x1="696.50" y1="375.20" x2="696.50" y2="382.60" stroke="#a8a8a8" stroke-width="0.7" />
<line x1="689.40" y1="382.30" x2="696.80" y2="382.30" stroke="#a8a8a8" stroke-width="0.7" />
<path d="M691.1 377.9h4l-2 2.4z" fill="#000"/>
<rect x="3.20" y="385.20" width="685.00" height="8.40" fill="#f7f7f7" />
<rect x="3.40" y="385.40" width="10.00" height="8.00" fill="#f0f0f0" stroke="#fff" stroke-width="0.5"/>
<line x1="13.20" y1="385.40" x2="13.20" y2="393.40" stroke="#696969" stroke-width="1" />
<line x1="3.40" y1="393.20" x2="13.40" y2="393.20" stroke="#696969" stroke-width="1" />
<line x1="12.30" y1="386.20" x2="12.30" y2="392.60" stroke="#a8a8a8" stroke-width="0.7" />
<line x1="4.20" y1="392.30" x2="12.60" y2="392.30" stroke="#a8a8a8" stroke-width="0.7" />
<path d="M9.2 387.9v3l-1.9-1.5z" fill="#909090"/>
<rect x="13.60" y="385.40" width="82.80" height="8.00" fill="#f0f0f0" stroke="#fff" stroke-width="0.5"/>
<line x1="96.20" y1="385.40" x2="96.20" y2="393.40" stroke="#696969" stroke-width="1" />
<line x1="13.60" y1="393.20" x2="96.40" y2="393.20" stroke="#696969" stroke-width="1" />
<line x1="95.30" y1="386.20" x2="95.30" y2="392.60" stroke="#a8a8a8" stroke-width="0.7" />
<line x1="14.40" y1="392.30" x2="95.60" y2="392.30" stroke="#a8a8a8" stroke-width="0.7" />
<rect x="678.40" y="385.40" width="9.60" height="8.00" fill="#f0f0f0" stroke="#fff" stroke-width="0.5"/>
<line x1="687.80" y1="385.40" x2="687.80" y2="393.40" stroke="#696969" stroke-width="1" />
<line x1="678.40" y1="393.20" x2="688.00" y2="393.20" stroke="#696969" stroke-width="1" />
<line x1="686.90" y1="386.20" x2="686.90" y2="392.60" stroke="#a8a8a8" stroke-width="0.7" />
<line x1="679.20" y1="392.30" x2="687.20" y2="392.30" stroke="#a8a8a8" stroke-width="0.7" />
<path d="M682.4 387.9v3l1.9-1.5z" fill="#909090"/>
<line x1="0.00" y1="398.00" x2="700.00" y2="398.00" stroke="#c0c0c0" stroke-width="0.8" />
<line x1="0.00" y1="398.80" x2="700.00" y2="398.80" stroke="#fcfcfc" stroke-width="0.8" />
<line x1="1.80" y1="401.20" x2="367.00" y2="401.20" stroke="#a8a8a8" stroke-width="0.7" />
<line x1="1.80" y1="401.20" x2="1.80" y2="416.00" stroke="#a8a8a8" stroke-width="0.7" />
<line x1="1.80" y1="416.00" x2="367.00" y2="416.00" stroke="#fdfdfd" stroke-width="0.8" />
<line x1="367.00" y1="401.20" x2="367.00" y2="416.00" stroke="#fdfdfd" stroke-width="0.8" />
<line x1="398.60" y1="401.20" x2="482.00" y2="401.20" stroke="#a8a8a8" stroke-width="0.7" />
<line x1="398.60" y1="401.20" x2="398.60" y2="416.00" stroke="#a8a8a8" stroke-width="0.7" />
<line x1="398.60" y1="416.00" x2="482.00" y2="416.00" stroke="#fdfdfd" stroke-width="0.8" />
<line x1="482.00" y1="401.20" x2="482.00" y2="416.00" stroke="#fdfdfd" stroke-width="0.8" />
<line x1="491.40" y1="401.20" x2="575.00" y2="401.20" stroke="#a8a8a8" stroke-width="0.7" />
<line x1="491.40" y1="401.20" x2="491.40" y2="416.00" stroke="#a8a8a8" stroke-width="0.7" />
<line x1="491.40" y1="416.00" x2="575.00" y2="416.00" stroke="#fdfdfd" stroke-width="0.8" />
<line x1="575.00" y1="401.20" x2="575.00" y2="416.00" stroke="#fdfdfd" stroke-width="0.8" />
<line x1="584.00" y1="401.20" x2="665.60" y2="401.20" stroke="#a8a8a8" stroke-width="0.7" />
<line x1="584.00" y1="401.20" x2="584.00" y2="416.00" stroke="#a8a8a8" stroke-width="0.7" />
<line x1="584.00" y1="416.00" x2="665.60" y2="416.00" stroke="#fdfdfd" stroke-width="0.8" />
<line x1="665.60" y1="401.20" x2="665.60" y2="416.00" stroke="#fdfdfd" stroke-width="0.8" />
<g transform="translate(380,408.4)"><circle cx="-0.8" cy="-0.6" r="5" fill="#3a78d8"/><path d="M-4.6-2.4q2.4-2.6 5 0q-0.6 2.6-2.6 2.4q-1.6 1.6-2.4-2.4z" fill="#58b848"/><path d="M1.6-1v4h-2l3.6 4l3.6-4h-2v-4z" fill="#f8c818" stroke="#a88008" stroke-width="0.4"/></g>
<rect x="391.40" y="400.40" width="6.40" height="7.00" fill="#10d810" />
<rect x="391.40" y="407.80" width="6.40" height="7.20" fill="#f0e810" />
<text x="394.60" y="406.00" font-family="Liberation Sans, sans-serif" font-size="4.8" font-weight="bold" fill="#003000" text-anchor="middle" >A</text>
<text x="394.60" y="413.60" font-family="Liberation Sans, sans-serif" font-size="4.8" font-weight="bold" fill="#403000" text-anchor="middle" >B</text>
<rect x="484.00" y="400.40" width="6.40" height="7.00" fill="#10d810" />
<rect x="484.00" y="407.80" width="6.40" height="7.20" fill="#f0e810" />
<text x="487.20" y="406.00" font-family="Liberation Sans, sans-serif" font-size="4.8" font-weight="bold" fill="#003000" text-anchor="middle" >A</text>
<text x="487.20" y="413.60" font-family="Liberation Sans, sans-serif" font-size="4.8" font-weight="bold" fill="#403000" text-anchor="middle" >B</text>
<rect x="576.60" y="400.40" width="6.40" height="7.00" fill="#10d810" />
<rect x="576.60" y="407.80" width="6.40" height="7.20" fill="#f0e810" />
<text x="579.80" y="406.00" font-family="Liberation Sans, sans-serif" font-size="4.8" font-weight="bold" fill="#003000" text-anchor="middle" >A</text>
<text x="579.80" y="413.60" font-family="Liberation Sans, sans-serif" font-size="4.8" font-weight="bold" fill="#403000" text-anchor="middle" >B</text>
<text x="441.00" y="410.60" font-family="Liberation Sans, sans-serif" font-size="6.9" font-weight="bold" fill="#14141c" text-anchor="start" textLength="38.00" lengthAdjust="spacingAndGlyphs" >156.25 KHz</text>
<text x="534.00" y="410.60" font-family="Liberation Sans, sans-serif" font-size="6.9" font-weight="bold" fill="#14141c" text-anchor="start" textLength="38.00" lengthAdjust="spacingAndGlyphs" >156.25 KHz</text>
<text x="626.60" y="410.60" font-family="Liberation Sans, sans-serif" font-size="6.9" font-weight="bold" fill="#14141c" text-anchor="start" textLength="38.00" lengthAdjust="spacingAndGlyphs" >156.25 KHz</text>
<rect x="667.40" y="400.80" width="31.00" height="14.40" fill="#c6c6c6" />
<line x1="667.40" y1="400.80" x2="698.40" y2="400.80" stroke="#e8e8e8" stroke-width="0.7" />
<line x1="667.40" y1="400.80" x2="667.40" y2="415.20" stroke="#e8e8e8" stroke-width="0.7" />
<line x1="667.40" y1="415.30" x2="698.60" y2="415.30" stroke="#7c7c7c" stroke-width="0.9" />
<line x1="698.50" y1="400.80" x2="698.50" y2="415.30" stroke="#7c7c7c" stroke-width="0.9" />
<g transform="translate(672.2,407.7)"><circle r="3.9" fill="#d8d8d8" stroke="#6c6c6c" stroke-width="0.9"/><path d="M0-3v3.1h2.8" stroke="#6c6c6c" stroke-width="0.7" fill="none"/></g>
<path d="M678.8 412h2.2v-8.6h3v8.6h2.6v-8.6h0.8" fill="none" stroke="#c01c1c" stroke-width="1.5"/>
<line x1="690.40" y1="403.20" x2="690.40" y2="413.00" stroke="#e2e2e2" stroke-width="1.1" />
<line x1="693.30" y1="403.20" x2="693.30" y2="413.00" stroke="#e2e2e2" stroke-width="1.1" />
<line x1="696.00" y1="403.20" x2="696.00" y2="413.00" stroke="#e2e2e2" stroke-width="1.1" />
<line x1="688.20" y1="401.20" x2="688.20" y2="415.00" stroke="#b0b0b0" stroke-width="0.6" />
<line x1="677.40" y1="401.20" x2="677.40" y2="415.00" stroke="#b8b8b8" stroke-width="0.5" />
</svg></body></html>
